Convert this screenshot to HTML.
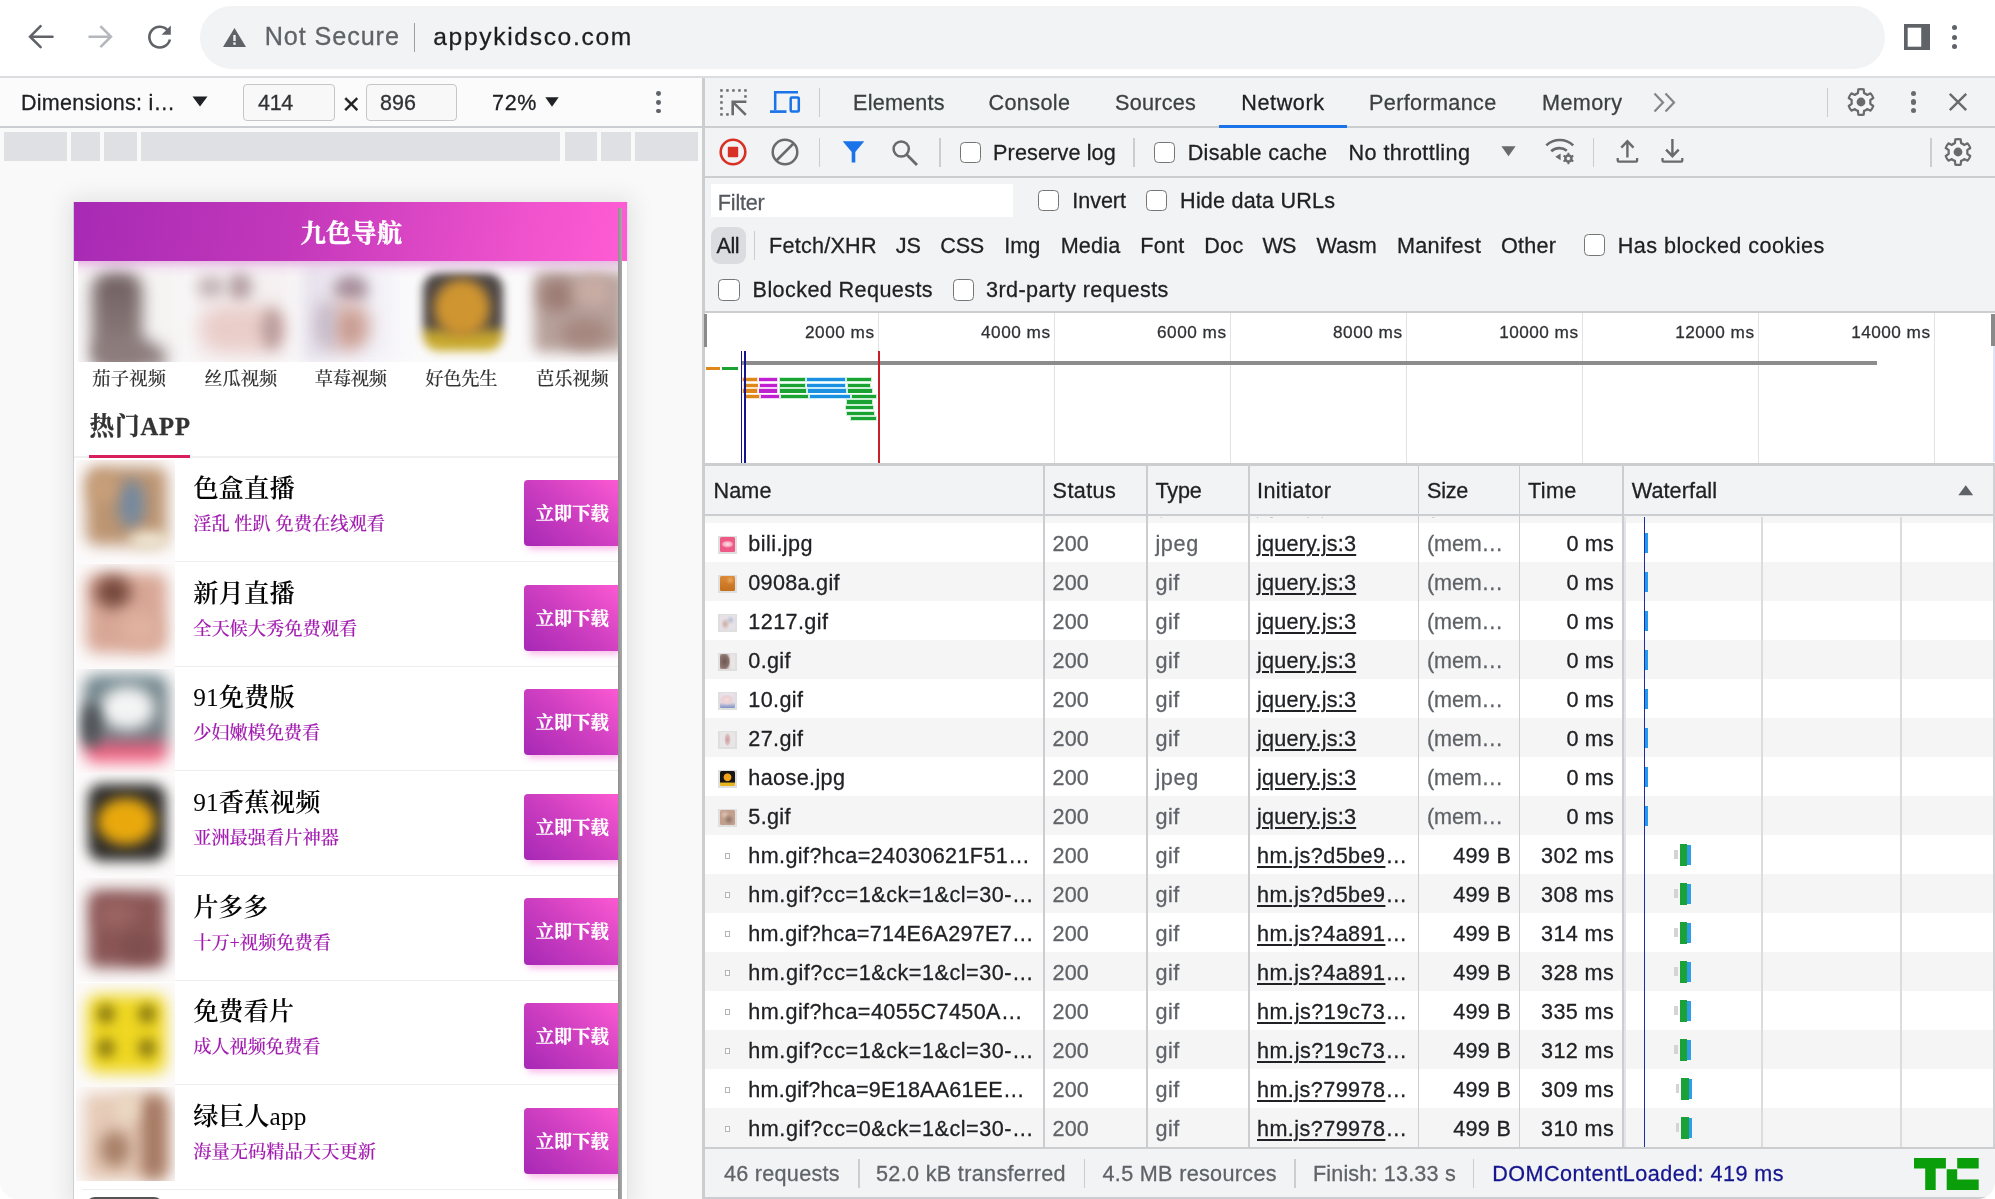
<!DOCTYPE html>
<html lang="zh-CN">
<head>
<meta charset="utf-8">
<title>appykidsco.com</title>
<style>
*{box-sizing:border-box;margin:0;padding:0}
html,body{width:1995px;height:1199px;overflow:hidden;background:#fff}
#root{opacity:.9999;position:absolute;left:0;top:0;width:1995px;height:1199px;overflow:hidden;background:#fff;font-family:"Liberation Sans","Noto Sans CJK SC",sans-serif}
.a{position:absolute}
.t{position:absolute;white-space:pre;display:block}
#phone{position:absolute;left:74.3px;top:202px;width:552.9px;height:997px;overflow:hidden;background:#fff}
.t{-webkit-text-stroke:.28px currentColor}
.f{-webkit-text-stroke:0}

</style>
</head>
<body>
<div id="root">
<div class="a" style="left:0px;top:0px;width:1995px;height:76px;background:#fff;"></div>
<div class="a" style="left:200px;top:6px;width:1685px;height:62.6px;background:#f1f3f4;border-radius:31.3px;"></div>
<div class="a" style="left:0px;top:75.8px;width:1995px;height:2px;background:#dcdde0;"></div>
<div class="a" style="left:0px;top:77.5px;width:702px;height:1122px;background:#f9f9f9;"></div>
<div class="a" style="left:0px;top:77.5px;width:702px;height:49.5px;background:#fbfbfb;"></div>
<div class="a" style="left:0px;top:126px;width:702px;height:1.9px;background:#cacdd1;"></div>
<div class="a" style="left:4px;top:132px;width:62.5px;height:28.5px;background:#dfe0e4;"></div>
<div class="a" style="left:71px;top:132px;width:29px;height:28.5px;background:#dfe0e4;"></div>
<div class="a" style="left:104px;top:132px;width:33px;height:28.5px;background:#dfe0e4;"></div>
<div class="a" style="left:141.3px;top:132px;width:418.7px;height:28.5px;background:#dfe0e4;"></div>
<div class="a" style="left:564.5px;top:132px;width:32.5px;height:28.5px;background:#dfe0e4;"></div>
<div class="a" style="left:601px;top:132px;width:30px;height:28.5px;background:#dfe0e4;"></div>
<div class="a" style="left:635px;top:132px;width:62.5px;height:28.5px;background:#dfe0e4;"></div>
<div class="a" style="left:702px;top:77.5px;width:1293px;height:1122px;background:#f1f3f4;"></div>
<div class="a" style="left:702px;top:77.5px;width:2.5px;height:1122px;background:#cbcdd1;"></div>
<div class="a" style="left:704px;top:126.3px;width:1291px;height:1.9px;background:#cbcdd1;"></div>
<div class="a" style="left:704px;top:176.3px;width:1291px;height:1.9px;background:#cbcdd1;"></div>
<div class="a" style="left:704px;top:311.2px;width:1291px;height:1.9px;background:#cbcdd1;"></div>
<svg class="a" style="left:26px;top:23px;" width="30" height="28" viewBox="0 0 30 28"><path d="M26.5 13.7H4.6M14.6 3.2L4.1 13.7l10.5 10.5" fill="none" stroke="#5f6368" stroke-width="2.6" stroke-linecap="round"/></svg>
<svg class="a" style="left:86px;top:23px;" width="30" height="28" viewBox="0 0 30 28"><path d="M2.5 13.7h21.9M14.4 3.2l10.5 10.5-10.5 10.5" fill="none" stroke="#b4b7bb" stroke-width="2.6"/></svg>
<svg class="a" style="left:145.3px;top:22px;" width="30" height="30" viewBox="0 0 30 30"><path d="M23.2 9.0A10.4 10.4 0 1 0 24.9 17.5" fill="none" stroke="#5f6368" stroke-width="2.6"/><path d="M25.8 3.6v9.2h-9.2z" fill="#5f6368"/></svg>
<svg class="a" style="left:222px;top:27px;" width="25" height="21" viewBox="0 0 25 21"><path d="M12.5 1L24 20H1z" fill="#5f6368"/><rect x="11.3" y="8" width="2.4" height="6" fill="#f1f3f4"/><rect x="11.3" y="15.4" width="2.4" height="2.4" fill="#f1f3f4"/></svg>
<div class="a" style="left:413.9px;top:22.6px;width:1.5px;height:29px;background:#9aa0a6;"></div>
<svg class="a" style="left:1904px;top:24px;" width="26" height="26" viewBox="0 0 26 26"><path d="M0 0h26v26H0z" fill="#5f6368"/><rect x="3.7" y="3.7" width="13.5" height="19" fill="#fff"/></svg>
<div class="a" style="left:1951.6px;top:25.099999999999998px;width:5.2px;height:5.2px;background:#5f6368;border-radius:50%;"></div>
<div class="a" style="left:1951.6px;top:34.5px;width:5.2px;height:5.2px;background:#5f6368;border-radius:50%;"></div>
<div class="a" style="left:1951.6px;top:43.8px;width:5.2px;height:5.2px;background:#5f6368;border-radius:50%;"></div>
<svg class="a" style="left:192px;top:96px;" width="16" height="11" viewBox="0 0 16 11"><path d="M0.5 0.5h15L8 10.5z" fill="#202124"/></svg>
<div class="a" style="left:243.2px;top:84.2px;width:92px;height:36.8px;background:#f8f8f8;border:1.3px solid #c6c6c6;border-radius:4px;"></div>
<div class="a" style="left:365.5px;top:84.2px;width:91.8px;height:36.8px;background:#f8f8f8;border:1.3px solid #c6c6c6;border-radius:4px;"></div>
<svg class="a" style="left:545px;top:96.5px;" width="14" height="10" viewBox="0 0 14 10"><path d="M0.3 0.3h13.4L7 9.7z" fill="#202124"/></svg>
<div class="a" style="left:656.2px;top:91.1px;width:4.8px;height:4.8px;background:#5f6368;border-radius:50%;"></div>
<div class="a" style="left:656.2px;top:99.89999999999999px;width:4.8px;height:4.8px;background:#5f6368;border-radius:50%;"></div>
<div class="a" style="left:656.2px;top:108.6px;width:4.8px;height:4.8px;background:#5f6368;border-radius:50%;"></div>
<svg class="a" style="left:719px;top:88px;" width="29" height="29" viewBox="0 0 29 29"><rect x="1.2" y="1.2" width="2.5" height="2.5" fill="#6a6a6a"/><rect x="7.2" y="1.2" width="2.5" height="2.5" fill="#6a6a6a"/><rect x="13.2" y="1.2" width="2.5" height="2.5" fill="#6a6a6a"/><rect x="19.2" y="1.2" width="2.5" height="2.5" fill="#6a6a6a"/><rect x="25.2" y="1.2" width="2.5" height="2.5" fill="#6a6a6a"/><rect x="25.2" y="7.2" width="2.5" height="2.5" fill="#6a6a6a"/><rect x="1.2" y="7.2" width="2.5" height="2.5" fill="#6a6a6a"/><rect x="1.2" y="13.2" width="2.5" height="2.5" fill="#6a6a6a"/><rect x="1.2" y="19.2" width="2.5" height="2.5" fill="#6a6a6a"/><rect x="1.2" y="25.2" width="2.5" height="2.5" fill="#6a6a6a"/><rect x="7.2" y="25.2" width="2.5" height="2.5" fill="#6a6a6a"/><path d="M12.4 13.800H27.400M13.700 12.500V27.200M14.200 14.300L26.800 26.900" fill="none" stroke="#6a6a6a" stroke-width="2.600"/></svg>
<svg class="a" style="left:769px;top:89px;" width="32" height="26" viewBox="0 0 32 26"><path d="M6.2 21.2V3.2H29" fill="none" stroke="#1a73e8" stroke-width="2.5"/><path d="M1 22.6H17.5" fill="none" stroke="#1a73e8" stroke-width="2.7"/><rect x="21.7" y="8.4" width="8.1" height="14.2" rx="1" fill="none" stroke="#1a73e8" stroke-width="2.5"/></svg>
<div class="a" style="left:818.7px;top:88px;width:1.5px;height:28.5px;background:#cbcdd1;"></div>
<div class="a" style="left:1219px;top:124.5px;width:128px;height:3.2px;background:#1a73e8;"></div>
<svg class="a" style="left:1653px;top:92px;" width="24" height="21" viewBox="0 0 24 21"><path d="M1.5 1.5l8.5 9-8.5 9M12.5 1.5l8.5 9-8.5 9" fill="none" stroke="#858585" stroke-width="2.2"/></svg>
<div class="a" style="left:1826.5px;top:88px;width:1.5px;height:28.5px;background:#cbcdd1;"></div>
<svg class="a" style="left:1845.4px;top:86px;" width="32" height="32" viewBox="-16 -16 32 32"><path d="M3.06 -8.89L2.68 -12.62A12.9 12.9 0 0 0 -2.68 -12.62L-3.06 -8.89A9.4 9.4 0 0 0 -6.17 -7.09L-9.59 -8.63A12.9 12.9 0 0 0 -12.27 -3.99L-9.23 -1.79A9.4 9.4 0 0 0 -9.23 1.79L-12.27 3.99A12.9 12.9 0 0 0 -9.59 8.63L-6.17 7.09A9.4 9.4 0 0 0 -3.06 8.89L-2.68 12.62A12.9 12.9 0 0 0 2.68 12.62L3.06 8.89A9.4 9.4 0 0 0 6.17 7.09L9.59 8.63A12.9 12.9 0 0 0 12.27 3.99L9.23 1.79A9.4 9.4 0 0 0 9.23 -1.79L12.27 -3.99A12.9 12.9 0 0 0 9.59 -8.63L6.17 -7.09A9.4 9.4 0 0 0 3.06 -8.89Z" fill="#f4f5f6" stroke="#6a6a6a" stroke-width="2.2" stroke-linejoin="round"/><circle cx="0" cy="0" r="4.4" fill="#6a6a6a"/></svg>
<div class="a" style="left:1910.8px;top:91.0px;width:5.2px;height:5.2px;background:#6a6a6a;border-radius:50%;"></div>
<div class="a" style="left:1910.8px;top:99.4px;width:5.2px;height:5.2px;background:#6a6a6a;border-radius:50%;"></div>
<div class="a" style="left:1910.8px;top:108.0px;width:5.2px;height:5.2px;background:#6a6a6a;border-radius:50%;"></div>
<svg class="a" style="left:1948px;top:92px;" width="20" height="20" viewBox="0 0 20 20"><path d="M1.8 1.8l16.4 16.4M18.200 1.8l-16.400 16.400" fill="none" stroke="#6a6a6a" stroke-width="2.4"/></svg>
<svg class="a" style="left:718px;top:137px;" width="30" height="30" viewBox="0 0 30 30"><circle cx="15" cy="15" r="12.3" fill="none" stroke="#d93025" stroke-width="2.6"/><rect x="9.8" y="9.8" width="10.4" height="10.4" rx="1" fill="#d93025"/></svg>
<svg class="a" style="left:770px;top:137px;" width="30" height="30" viewBox="0 0 30 30"><circle cx="15" cy="15" r="12.3" fill="none" stroke="#6a6a6a" stroke-width="2.5"/><path d="M6.5 23.500L23.500 6.5" stroke="#6a6a6a" stroke-width="2.5"/></svg>
<div class="a" style="left:818.7px;top:137.5px;width:1.5px;height:29px;background:#cbcdd1;"></div>
<svg class="a" style="left:842px;top:140px;" width="24" height="24" viewBox="0 0 24 24"><path d="M0.7 1.2H22.3L13.3 12.1V22.6H9.7V12.1z" fill="#1a73e8"/></svg>
<svg class="a" style="left:891px;top:138.5px;" width="28" height="27" viewBox="0 0 28 27"><circle cx="10.2" cy="10" r="7.6" fill="none" stroke="#6a6a6a" stroke-width="2.5"/><path d="M15.6 15.6L26 26" stroke="#6a6a6a" stroke-width="2.8"/></svg>
<div class="a" style="left:939.3px;top:137.5px;width:1.5px;height:29px;background:#cbcdd1;"></div>
<div class="a" style="left:960px;top:141.7px;width:21.3px;height:21.3px;background:#fff;border:1.5px solid #767676;border-radius:4.5px;"></div>
<div class="a" style="left:1133.3px;top:137.5px;width:1.5px;height:29px;background:#cbcdd1;"></div>
<div class="a" style="left:1153.8px;top:141.7px;width:21.3px;height:21.3px;background:#fff;border:1.5px solid #767676;border-radius:4.5px;"></div>
<svg class="a" style="left:1501.3px;top:146px;" width="15" height="10.5" viewBox="0 0 15 10.5"><path d="M0.4 0.2h14.2L7.5 10.3z" fill="#6a6a6a"/></svg>
<svg class="a" style="left:1544px;top:137px;" width="32" height="28" viewBox="0 0 32 28"><path d="M2.3 8.400C9.800 1.200 21.700 1.200 29.200 8.400" fill="none" stroke="#6a6a6a" stroke-width="2.6"/><path d="M7.2 14.300c4.300-4.100 11.400-4.100 15.600-0.600" fill="none" stroke="#6a6a6a" stroke-width="2.6"/><path d="M11.300 19.800l5.300-3.200v6.600z" fill="#6a6a6a"/><circle cx="24.400" cy="21.500" r="3.300" fill="none" stroke="#6a6a6a" stroke-width="2.100"/><path d="M24.400 15.800v11.400M19.500 18.650l9.800 5.700M19.500 24.350l9.800-5.700" stroke="#6a6a6a" stroke-width="1.900"/><circle cx="24.400" cy="21.500" r="1.700" fill="#f1f3f4"/></svg>
<div class="a" style="left:1592.7px;top:137.5px;width:1.5px;height:29px;background:#cbcdd1;"></div>
<svg class="a" style="left:1615px;top:138px;" width="25" height="26" viewBox="0 0 25 26"><path d="M12.4 19.500V2.800M6.300 9.600l6.100-6.400 6.100 6.400" fill="none" stroke="#6a6a6a" stroke-width="2.4"/><path d="M2.700 20v2.500q0 1.100 1.100 1.100h17.200q1.100 0 1.100-1.100V20" fill="none" stroke="#6a6a6a" stroke-width="2.300"/></svg>
<svg class="a" style="left:1659.7px;top:138px;" width="25" height="26" viewBox="0 0 25 26"><path d="M12.4 1V18M6.100 11.600l6.300 6.600 6.300-6.600" fill="none" stroke="#6a6a6a" stroke-width="2.4"/><path d="M2.500 20v2.500q0 1.100 1.100 1.100h17.600q1.100 0 1.100-1.100V20" fill="none" stroke="#6a6a6a" stroke-width="2.300"/></svg>
<div class="a" style="left:1930px;top:137.5px;width:1.5px;height:29px;background:#cbcdd1;"></div>
<svg class="a" style="left:1941.7px;top:136.2px;" width="32" height="32" viewBox="-16 -16 32 32"><path d="M3.06 -8.89L2.68 -12.62A12.9 12.9 0 0 0 -2.68 -12.62L-3.06 -8.89A9.4 9.4 0 0 0 -6.17 -7.09L-9.59 -8.63A12.9 12.9 0 0 0 -12.27 -3.99L-9.23 -1.79A9.4 9.4 0 0 0 -9.23 1.79L-12.27 3.99A12.9 12.9 0 0 0 -9.59 8.63L-6.17 7.09A9.4 9.4 0 0 0 -3.06 8.89L-2.68 12.62A12.9 12.9 0 0 0 2.68 12.62L3.06 8.89A9.4 9.4 0 0 0 6.17 7.09L9.59 8.63A12.9 12.9 0 0 0 12.27 3.99L9.23 1.79A9.4 9.4 0 0 0 9.23 -1.79L12.27 -3.99A12.9 12.9 0 0 0 9.59 -8.63L6.17 -7.09A9.4 9.4 0 0 0 3.06 -8.89Z" fill="#f4f5f6" stroke="#6a6a6a" stroke-width="2.2" stroke-linejoin="round"/><circle cx="0" cy="0" r="4.4" fill="#6a6a6a"/></svg>
<div class="a" style="left:711px;top:184px;width:302px;height:33px;background:#fff;"></div>
<div class="a" style="left:1037.7px;top:190px;width:21.3px;height:21.3px;background:#fff;border:1.5px solid #767676;border-radius:4.5px;"></div>
<div class="a" style="left:1145.6px;top:190px;width:21.3px;height:21.3px;background:#fff;border:1.5px solid #767676;border-radius:4.5px;"></div>
<div class="a" style="left:711px;top:226.8px;width:34.8px;height:37.4px;background:#dadce0;border-radius:9px;"></div>
<div class="a" style="left:753.8px;top:231px;width:1.5px;height:28.5px;background:#cbcdd1;"></div>
<div class="a" style="left:1584px;top:234.3px;width:21.3px;height:21.3px;background:#fff;border:1.5px solid #767676;border-radius:4.5px;"></div>
<div class="a" style="left:718.3px;top:279.4px;width:21.3px;height:21.3px;background:#fff;border:1.5px solid #767676;border-radius:4.5px;"></div>
<div class="a" style="left:952.6px;top:279.4px;width:21.3px;height:21.3px;background:#fff;border:1.5px solid #767676;border-radius:4.5px;"></div>
<div class="a" style="left:704.5px;top:313px;width:1290.5px;height:150px;background:#fff;"></div>
<div class="a" style="left:878.0px;top:313px;width:1.3px;height:150px;background:#e2e2e2;"></div>
<div class="a" style="left:1054.0px;top:313px;width:1.3px;height:150px;background:#e2e2e2;"></div>
<div class="a" style="left:1230.0px;top:313px;width:1.3px;height:150px;background:#e2e2e2;"></div>
<div class="a" style="left:1406.0px;top:313px;width:1.3px;height:150px;background:#e2e2e2;"></div>
<div class="a" style="left:1582.0px;top:313px;width:1.3px;height:150px;background:#e2e2e2;"></div>
<div class="a" style="left:1758.0px;top:313px;width:1.3px;height:150px;background:#e2e2e2;"></div>
<div class="a" style="left:1934.0px;top:313px;width:1.3px;height:150px;background:#e2e2e2;"></div>
<div class="a" style="left:703.5px;top:314px;width:3.3px;height:32.6px;background:#8a8a8a;"></div>
<div class="a" style="left:1991px;top:313.7px;width:4px;height:32.7px;background:#8a8a8a;"></div>
<div class="a" style="left:1993px;top:346.4px;width:2px;height:116px;background:#dce6f8;"></div>
<div class="a" style="left:742px;top:361px;width:1134.7px;height:3.7px;background:#8c8c8c;"></div>
<div class="a" style="left:706.2px;top:366.8px;width:13.6px;height:3.5px;background:#e0871c;"></div>
<div class="a" style="left:722px;top:366.8px;width:16.1px;height:3.5px;background:#1aa332;"></div>
<div class="a" style="left:741.8000000000001px;top:377.1px;width:16.299999999999933px;height:5.2px;background:#fbe3c4;"></div>
<div class="a" style="left:758.5px;top:377.1px;width:19.500000000000092px;height:5.2px;background:#f3d3f7;"></div>
<div class="a" style="left:778.9000000000001px;top:377.1px;width:26.899999999999956px;height:5.2px;background:#c9f0d2;"></div>
<div class="a" style="left:806.2px;top:377.1px;width:39.49999999999998px;height:5.2px;background:#c8ecfb;"></div>
<div class="a" style="left:846.4000000000001px;top:377.1px;width:25.399999999999956px;height:5.2px;background:#c9f0d2;"></div>
<div class="a" style="left:742.6px;top:378px;width:14.699999999999932px;height:3.4px;background:#e0871c;"></div>
<div class="a" style="left:759.3px;top:378px;width:17.90000000000009px;height:3.4px;background:#c020d0;"></div>
<div class="a" style="left:779.7px;top:378px;width:25.299999999999955px;height:3.4px;background:#1aa332;"></div>
<div class="a" style="left:807px;top:378px;width:37.89999999999998px;height:3.4px;background:#1c90e0;"></div>
<div class="a" style="left:847.2px;top:378px;width:23.799999999999955px;height:3.4px;background:#1aa332;"></div>
<div class="a" style="left:742.7px;top:382.70000000000005px;width:15.6px;height:5.2px;background:#fbe3c4;"></div>
<div class="a" style="left:759.0px;top:382.70000000000005px;width:19.000000000000092px;height:5.2px;background:#f3d3f7;"></div>
<div class="a" style="left:779.2px;top:382.70000000000005px;width:26.899999999999956px;height:5.2px;background:#c9f0d2;"></div>
<div class="a" style="left:806.5px;top:382.70000000000005px;width:39.50000000000009px;height:5.2px;background:#c8ecfb;"></div>
<div class="a" style="left:846.7px;top:382.70000000000005px;width:24.300000000000047px;height:5.2px;background:#c9f0d2;"></div>
<div class="a" style="left:743.5px;top:383.6px;width:14.0px;height:3.4px;background:#e0871c;"></div>
<div class="a" style="left:759.8px;top:383.6px;width:17.40000000000009px;height:3.4px;background:#c020d0;"></div>
<div class="a" style="left:780px;top:383.6px;width:25.299999999999955px;height:3.4px;background:#1aa332;"></div>
<div class="a" style="left:807.3px;top:383.6px;width:37.90000000000009px;height:3.4px;background:#1c90e0;"></div>
<div class="a" style="left:847.5px;top:383.6px;width:22.700000000000045px;height:3.4px;background:#1aa332;"></div>
<div class="a" style="left:741.8000000000001px;top:388.3px;width:16.299999999999933px;height:5.2px;background:#fbe3c4;"></div>
<div class="a" style="left:758.5px;top:388.3px;width:19.500000000000092px;height:5.2px;background:#f3d3f7;"></div>
<div class="a" style="left:778.9000000000001px;top:388.3px;width:27.69999999999991px;height:5.2px;background:#c9f0d2;"></div>
<div class="a" style="left:807.2px;top:388.3px;width:39.399999999999956px;height:5.2px;background:#c8ecfb;"></div>
<div class="a" style="left:847.2px;top:388.3px;width:25.6px;height:5.2px;background:#c9f0d2;"></div>
<div class="a" style="left:742.6px;top:389.2px;width:14.699999999999932px;height:3.4px;background:#e0871c;"></div>
<div class="a" style="left:759.3px;top:389.2px;width:17.90000000000009px;height:3.4px;background:#c020d0;"></div>
<div class="a" style="left:779.7px;top:389.2px;width:26.09999999999991px;height:3.4px;background:#1aa332;"></div>
<div class="a" style="left:808px;top:389.2px;width:37.799999999999955px;height:3.4px;background:#1c90e0;"></div>
<div class="a" style="left:848px;top:389.2px;width:24px;height:3.4px;background:#1aa332;"></div>
<div class="a" style="left:745.2px;top:393.90000000000003px;width:14.6px;height:5.2px;background:#fbe3c4;"></div>
<div class="a" style="left:760.4000000000001px;top:393.90000000000003px;width:19.399999999999956px;height:5.2px;background:#f3d3f7;"></div>
<div class="a" style="left:780.4000000000001px;top:393.90000000000003px;width:28.19999999999991px;height:5.2px;background:#c9f0d2;"></div>
<div class="a" style="left:808.8000000000001px;top:393.90000000000003px;width:41.99999999999998px;height:5.2px;background:#c8ecfb;"></div>
<div class="a" style="left:851.4000000000001px;top:393.90000000000003px;width:25.49999999999998px;height:5.2px;background:#c9f0d2;"></div>
<div class="a" style="left:746px;top:394.8px;width:13px;height:3.4px;background:#e0871c;"></div>
<div class="a" style="left:761.2px;top:394.8px;width:17.799999999999955px;height:3.4px;background:#c020d0;"></div>
<div class="a" style="left:781.2px;top:394.8px;width:26.59999999999991px;height:3.4px;background:#1aa332;"></div>
<div class="a" style="left:809.6px;top:394.8px;width:40.39999999999998px;height:3.4px;background:#1c90e0;"></div>
<div class="a" style="left:852.2px;top:394.8px;width:23.899999999999977px;height:3.4px;background:#1aa332;"></div>
<div class="a" style="left:846.1px;top:399.40000000000003px;width:26.90000000000007px;height:5.2px;background:#c9f0d2;"></div>
<div class="a" style="left:846.9px;top:400.3px;width:25.300000000000068px;height:3.4px;background:#1aa332;"></div>
<div class="a" style="left:845.4000000000001px;top:405.0px;width:28.49999999999998px;height:5.2px;background:#c9f0d2;"></div>
<div class="a" style="left:846.2px;top:405.9px;width:26.899999999999977px;height:3.4px;background:#1aa332;"></div>
<div class="a" style="left:845.8000000000001px;top:410.6px;width:29.399999999999956px;height:5.2px;background:#c9f0d2;"></div>
<div class="a" style="left:846.6px;top:411.5px;width:27.799999999999955px;height:3.4px;background:#1aa332;"></div>
<div class="a" style="left:850.1px;top:416.1px;width:26.800000000000047px;height:5.2px;background:#c9f0d2;"></div>
<div class="a" style="left:850.9px;top:417px;width:25.200000000000045px;height:3.4px;background:#1aa332;"></div>
<div class="a" style="left:740.6px;top:351px;width:1.6px;height:112px;background:#14148c;"></div>
<div class="a" style="left:744.1px;top:351px;width:1.8px;height:112px;background:#14148c;"></div>
<div class="a" style="left:878.1px;top:351px;width:1.7px;height:112px;background:#c8202a;"></div>
<div class="a" style="left:704.5px;top:462.5px;width:1290.5px;height:3px;background:#cbcdd1;"></div>
<div class="a" style="left:704.5px;top:465.5px;width:1290.5px;height:49px;background:#f1f3f4;"></div>
<div class="a" style="left:704.5px;top:514.2px;width:1290.5px;height:2.3px;background:#cbcdd1;"></div>
<svg class="a" style="left:1957.5px;top:485px;" width="15.5" height="10.5" viewBox="0 0 15.5 10.5"><path d="M0.3 10.2h14.9L7.75 0.3z" fill="#5f6368"/></svg>
<div class="a" style="left:704.5px;top:516.5px;width:1290.5px;height:6.600000000000023px;background:#f5f5f5;"></div>
<div class="a" style="left:704.5px;top:516.5px;width:1290px;height:6.600000000000023px;overflow:hidden" id="prow"><span class="t" id="t48" style='left:450.90px;top:-25.10px;font:400 21.6px/28px "Liberation Sans","Noto Sans CJK SC",sans-serif;color:#5f6368;letter-spacing:0.544px;'>gif</span>
<span class="t" id="t49" style='left:552.50px;top:-25.10px;font:400 21.6px/28px "Liberation Sans","Noto Sans CJK SC",sans-serif;color:#202124;letter-spacing:0.217px;text-decoration:underline;text-decoration-thickness:1.6px;text-underline-offset:2.5px;'>jquery.js:3</span>
<span class="t" id="t50" style='left:722.50px;top:-25.10px;font:400 21.6px/28px "Liberation Sans","Noto Sans CJK SC",sans-serif;color:#5f6368;letter-spacing:-0.145px;'>(mem…</span></div>
<div class="a" style="left:704.5px;top:523.1px;width:1290.5px;height:39.0px;background:#fff;"></div>
<div class="a" style="left:718.2px;top:535.5px;width:18.6px;height:18.2px;background:#dfdfdf;"><div class="a" style="left:1.6px;top:1.6px;width:15.4px;height:15px;border-radius:1.5px;background:radial-gradient(ellipse 42% 24% at 50% 48%,#fde3ea 0,#f7a6bc 70%,transparent 100%),#ee5a85"></div></div>
<div class="a" style="left:704.5px;top:562.1px;width:1290.5px;height:39.0px;background:#f5f5f5;"></div>
<div class="a" style="left:718.2px;top:574.5px;width:18.6px;height:18.2px;background:#dfdfdf;"><div class="a" style="left:1.6px;top:1.6px;width:15.4px;height:15px;border-radius:1.5px;background:radial-gradient(ellipse 30% 30% at 68% 28%,#eaa45a 0,transparent 100%),linear-gradient(#db8a36,#c4701f)"></div></div>
<div class="a" style="left:704.5px;top:601.1px;width:1290.5px;height:39.0px;background:#fff;"></div>
<div class="a" style="left:718.2px;top:613.5px;width:18.6px;height:18.2px;background:#dfdfdf;"><div class="a" style="left:1.6px;top:1.6px;width:15.4px;height:15px;border-radius:1.5px;background:radial-gradient(ellipse 30% 40% at 35% 60%,#c9ad9f 0,transparent 100%),radial-gradient(ellipse 30% 30% at 70% 35%,#b9bfd6 0,transparent 100%),#e6e1e7"></div></div>
<div class="a" style="left:704.5px;top:640.1px;width:1290.5px;height:39.0px;background:#f5f5f5;"></div>
<div class="a" style="left:718.2px;top:652.5px;width:18.6px;height:18.2px;background:#dfdfdf;"><div class="a" style="left:1.6px;top:1.6px;width:15.4px;height:15px;border-radius:1.5px;background:radial-gradient(ellipse 40% 60% at 30% 50%,#6f5853 0,#8a736d 70%,transparent 100%),linear-gradient(90deg,#9a8580,#e9e5e5 75%)"></div></div>
<div class="a" style="left:704.5px;top:679.1px;width:1290.5px;height:39.0px;background:#fff;"></div>
<div class="a" style="left:718.2px;top:691.5px;width:18.6px;height:18.2px;background:#dfdfdf;"><div class="a" style="left:1.6px;top:1.6px;width:15.4px;height:15px;border-radius:1.5px;background:radial-gradient(ellipse 45% 35% at 45% 45%,#f3dcdc 0,#ecd0d2 70%,transparent 100%),linear-gradient(#e9e3ea 0,#e4dbe4 62%,#7f8fc4 100%)"></div></div>
<div class="a" style="left:704.5px;top:718.1px;width:1290.5px;height:39.0px;background:#f5f5f5;"></div>
<div class="a" style="left:718.2px;top:730.5px;width:18.6px;height:18.2px;background:#dfdfdf;"><div class="a" style="left:1.6px;top:1.6px;width:15.4px;height:15px;border-radius:1.5px;background:radial-gradient(ellipse 22% 45% at 50% 50%,#cf9d9d 0,#ddbcbc 70%,transparent 100%),#e8e5e7"></div></div>
<div class="a" style="left:704.5px;top:757.1px;width:1290.5px;height:39.0px;background:#fff;"></div>
<div class="a" style="left:718.2px;top:769.5px;width:18.6px;height:18.2px;background:#dfdfdf;"><div class="a" style="left:1.6px;top:1.6px;width:15.4px;height:15px;border-radius:1.5px;background:radial-gradient(circle 4.3px at 50% 42%,#f0a51c 0,#eea21a 80%,transparent 100%),linear-gradient(#181614 0,#181614 74%,#e8b51e 80%,#e8b51e 100%)"></div></div>
<div class="a" style="left:704.5px;top:796.1px;width:1290.5px;height:39.0px;background:#f5f5f5;"></div>
<div class="a" style="left:718.2px;top:808.5px;width:18.6px;height:18.2px;background:#dfdfdf;"><div class="a" style="left:1.6px;top:1.6px;width:15.4px;height:15px;border-radius:1.5px;background:radial-gradient(ellipse 35% 35% at 60% 65%,#8d7468 0,transparent 100%),radial-gradient(ellipse 30% 30% at 30% 30%,#dcc0b0 0,transparent 100%),#c3a08e"></div></div>
<div class="a" style="left:704.5px;top:835.1px;width:1290.5px;height:39.0px;background:#fff;"></div>
<div class="a" style="left:724.8px;top:853.4px;width:5.4px;height:5.4px;background:#fff;border:1.2px solid #b4b4b4;"></div>
<div class="a" style="left:704.5px;top:874.1px;width:1290.5px;height:39.0px;background:#f5f5f5;"></div>
<div class="a" style="left:724.8px;top:892.4px;width:5.4px;height:5.4px;background:#fff;border:1.2px solid #b4b4b4;"></div>
<div class="a" style="left:704.5px;top:913.1px;width:1290.5px;height:39.0px;background:#fff;"></div>
<div class="a" style="left:724.8px;top:931.4px;width:5.4px;height:5.4px;background:#fff;border:1.2px solid #b4b4b4;"></div>
<div class="a" style="left:704.5px;top:952.1px;width:1290.5px;height:39.0px;background:#f5f5f5;"></div>
<div class="a" style="left:724.8px;top:970.4px;width:5.4px;height:5.4px;background:#fff;border:1.2px solid #b4b4b4;"></div>
<div class="a" style="left:704.5px;top:991.1px;width:1290.5px;height:39.0px;background:#fff;"></div>
<div class="a" style="left:724.8px;top:1009.4px;width:5.4px;height:5.4px;background:#fff;border:1.2px solid #b4b4b4;"></div>
<div class="a" style="left:704.5px;top:1030.1px;width:1290.5px;height:39.0px;background:#f5f5f5;"></div>
<div class="a" style="left:724.8px;top:1048.3999999999999px;width:5.4px;height:5.4px;background:#fff;border:1.2px solid #b4b4b4;"></div>
<div class="a" style="left:704.5px;top:1069.1px;width:1290.5px;height:39.0px;background:#fff;"></div>
<div class="a" style="left:724.8px;top:1087.3999999999999px;width:5.4px;height:5.4px;background:#fff;border:1.2px solid #b4b4b4;"></div>
<div class="a" style="left:704.5px;top:1108.1px;width:1290.5px;height:39.200000000000045px;background:#f5f5f5;"></div>
<div class="a" style="left:724.8px;top:1126.3999999999999px;width:5.4px;height:5.4px;background:#fff;border:1.2px solid #b4b4b4;"></div>
<div class="a" style="left:1043.2px;top:465.5px;width:1.6px;height:682px;background:#cbcdd1;"></div>
<div class="a" style="left:1146px;top:465.5px;width:1.6px;height:682px;background:#cbcdd1;"></div>
<div class="a" style="left:1248.3px;top:465.5px;width:1.6px;height:682px;background:#cbcdd1;"></div>
<div class="a" style="left:1417.8px;top:465.5px;width:1.6px;height:682px;background:#cbcdd1;"></div>
<div class="a" style="left:1518.8px;top:465.5px;width:1.6px;height:682px;background:#cbcdd1;"></div>
<div class="a" style="left:1622.2px;top:465.5px;width:1.6px;height:682px;background:#cbcdd1;"></div>
<div class="a" style="left:1623.8px;top:516.5px;width:2.2px;height:631px;background:#e4e5e8;"></div>
<div class="a" style="left:1761.4px;top:516.5px;width:1.3px;height:631px;background:#dcdcdc;"></div>
<div class="a" style="left:1900.4px;top:516.5px;width:1.3px;height:631px;background:#dcdcdc;"></div>
<div class="a" style="left:1644.3px;top:533.1px;width:3.5px;height:19.5px;background:#1f9bf0;"></div>
<div class="a" style="left:1644.3px;top:572.1px;width:3.5px;height:19.5px;background:#1f9bf0;"></div>
<div class="a" style="left:1644.3px;top:611.1px;width:3.5px;height:19.5px;background:#1f9bf0;"></div>
<div class="a" style="left:1644.3px;top:650.1px;width:3.5px;height:19.5px;background:#1f9bf0;"></div>
<div class="a" style="left:1644.3px;top:689.1px;width:3.5px;height:19.5px;background:#1f9bf0;"></div>
<div class="a" style="left:1644.3px;top:728.1px;width:3.5px;height:19.5px;background:#1f9bf0;"></div>
<div class="a" style="left:1644.3px;top:767.1px;width:3.5px;height:19.5px;background:#1f9bf0;"></div>
<div class="a" style="left:1644.3px;top:806.1px;width:3.5px;height:19.5px;background:#1f9bf0;"></div>
<div class="a" style="left:1674.4px;top:850.3000000000001px;width:3.6px;height:9px;background:#d4d4d4;"></div>
<div class="a" style="left:1679.6px;top:843.8000000000001px;width:7.9px;height:22.6px;background:#1aa238;"></div>
<div class="a" style="left:1687.4px;top:845.3000000000001px;width:3.5px;height:19.7px;background:#2f9ee8;"></div>
<div class="a" style="left:1674.4px;top:889.3000000000001px;width:3.6px;height:9px;background:#d4d4d4;"></div>
<div class="a" style="left:1679.6px;top:882.8000000000001px;width:7.9px;height:22.6px;background:#1aa238;"></div>
<div class="a" style="left:1687.4px;top:884.3000000000001px;width:3.5px;height:19.7px;background:#2f9ee8;"></div>
<div class="a" style="left:1674.4px;top:928.3000000000001px;width:3.6px;height:9px;background:#d4d4d4;"></div>
<div class="a" style="left:1679.6px;top:921.8000000000001px;width:7.9px;height:22.6px;background:#1aa238;"></div>
<div class="a" style="left:1687.4px;top:923.3000000000001px;width:3.5px;height:19.7px;background:#2f9ee8;"></div>
<div class="a" style="left:1674.4px;top:967.3000000000001px;width:3.6px;height:9px;background:#d4d4d4;"></div>
<div class="a" style="left:1679.6px;top:960.8000000000001px;width:7.9px;height:22.6px;background:#1aa238;"></div>
<div class="a" style="left:1687.4px;top:962.3000000000001px;width:3.5px;height:19.7px;background:#2f9ee8;"></div>
<div class="a" style="left:1674.4px;top:1006.3000000000001px;width:3.6px;height:9px;background:#d4d4d4;"></div>
<div class="a" style="left:1679.6px;top:999.8000000000001px;width:7.9px;height:22.6px;background:#1aa238;"></div>
<div class="a" style="left:1687.4px;top:1001.3000000000001px;width:3.5px;height:19.7px;background:#2f9ee8;"></div>
<div class="a" style="left:1674.4px;top:1045.3px;width:3.6px;height:9px;background:#d4d4d4;"></div>
<div class="a" style="left:1679.6px;top:1038.8px;width:7.9px;height:22.6px;background:#1aa238;"></div>
<div class="a" style="left:1687.4px;top:1040.3px;width:3.5px;height:19.7px;background:#2f9ee8;"></div>
<div class="a" style="left:1675.9px;top:1084.3px;width:3.6px;height:9px;background:#d4d4d4;"></div>
<div class="a" style="left:1681.1px;top:1077.8px;width:7.45px;height:22.6px;background:#1aa238;"></div>
<div class="a" style="left:1688.9px;top:1079.3px;width:3.5px;height:19.7px;background:#2f9ee8;"></div>
<div class="a" style="left:1675.9px;top:1123.3px;width:3.6px;height:9px;background:#d4d4d4;"></div>
<div class="a" style="left:1681.1px;top:1116.8px;width:7.45px;height:22.6px;background:#1aa238;"></div>
<div class="a" style="left:1688.9px;top:1118.3px;width:3.5px;height:19.7px;background:#2f9ee8;"></div>
<div class="a" style="left:1643.6px;top:516.5px;width:1.6px;height:631px;background:#1f2ca6;"></div>
<div class="a" style="left:1992.6px;top:465.5px;width:2.4px;height:734px;background:#cfd1d5;"></div>
<div class="a" style="left:704.5px;top:1147.3px;width:1290.5px;height:52px;background:#f1f3f4;"></div>
<div class="a" style="left:704.5px;top:1147.1px;width:1290.5px;height:2px;background:#cbcdd1;"></div>
<div class="a" style="left:704.5px;top:1197.2px;width:1290.5px;height:2px;background:#cbcdd1;"></div>
<div class="a" style="left:858px;top:1159px;width:1.5px;height:29px;background:#cbcdd1;"></div>
<div class="a" style="left:1083.6px;top:1159px;width:1.5px;height:29px;background:#cbcdd1;"></div>
<div class="a" style="left:1294.2px;top:1159px;width:1.5px;height:29px;background:#cbcdd1;"></div>
<div class="a" style="left:1472.5px;top:1159px;width:1.5px;height:29px;background:#cbcdd1;"></div>
<svg class="a" style="left:1914.3px;top:1157.5px;" width="65" height="32" viewBox="0 0 65 32"><path d="M0 0H31.900V10.500H21.700V32H11.200V10.500H0z" fill="#0a9f0a"/><path d="M43.200 0H64.700V10.500H43.200zM32.700 11.300H43.200V21.500H64.700V32H32.700z" fill="#0a9f0a"/></svg>
<svg class="a" style="left:1978px;top:1182px;" width="17" height="17" viewBox="0 0 17 17"><path d="M17 0V17H0A17 17 0 0 0 17 0z" fill="#fff"/></svg>
<svg class="a" style="left:0px;top:1182px;" width="17" height="17" viewBox="0 0 17 17"><path d="M0 0V17H17A17 17 0 0 1 0 0z" fill="#fff"/></svg>
<div class="a" style="left:74.3px;top:202px;width:552.9px;height:1000px;background:#fff;box-shadow:0 2px 22px 6px rgba(0,0,0,.09);"></div>
<div class="a" style="left:73.3px;top:202px;width:1px;height:1000px;background:#cdcdd4;"></div>
<div class="a" style="left:627.3px;top:202px;width:1px;height:1000px;background:#e0e0e4;"></div>
<span class="t" id="t0" style='left:264.70px;top:20.20px;font:400 25.2px/33px "Liberation Sans","Noto Sans CJK SC",sans-serif;color:#5f6368;letter-spacing:0.911px;'>Not Secure</span>
<span class="t" id="t1" style='left:433.20px;top:21.10px;font:400 24.6px/32px "Liberation Sans","Noto Sans CJK SC",sans-serif;color:#1d1e20;letter-spacing:1.674px;'>appykidsco.com</span>
<span class="t" id="t2" style='left:21.00px;top:89.00px;font:400 21.5px/28px "Liberation Sans","Noto Sans CJK SC",sans-serif;color:#202124;letter-spacing:0.266px;'>Dimensions: i…</span>
<span class="t" id="t3" style='left:258.00px;top:89.00px;font:400 21.5px/28px "Liberation Sans","Noto Sans CJK SC",sans-serif;color:#303134;letter-spacing:-0.287px;'>414</span>
<span class="t" id="t4" style='left:342.50px;top:84.00px;font:400 30px/39px "Liberation Sans","Noto Sans CJK SC",sans-serif;color:#202124;'>×</span>
<span class="t" id="t5" style='left:380.00px;top:89.00px;font:400 21.5px/28px "Liberation Sans","Noto Sans CJK SC",sans-serif;color:#303134;letter-spacing:0.062px;'>896</span>
<span class="t" id="t6" style='left:492.00px;top:89.00px;font:400 21.5px/28px "Liberation Sans","Noto Sans CJK SC",sans-serif;color:#202124;letter-spacing:0.727px;'>72%</span>
<span class="t" id="t7" style='left:853.00px;top:89.00px;font:400 21.6px/28px "Liberation Sans","Noto Sans CJK SC",sans-serif;color:#3c4043;letter-spacing:0.226px;'>Elements</span>
<span class="t" id="t8" style='left:988.50px;top:89.00px;font:400 21.6px/28px "Liberation Sans","Noto Sans CJK SC",sans-serif;color:#3c4043;letter-spacing:0.378px;'>Console</span>
<span class="t" id="t9" style='left:1115.00px;top:89.00px;font:400 21.6px/28px "Liberation Sans","Noto Sans CJK SC",sans-serif;color:#3c4043;letter-spacing:0.264px;'>Sources</span>
<span class="t" id="t10" style='left:1241.30px;top:89.00px;font:400 21.6px/28px "Liberation Sans","Noto Sans CJK SC",sans-serif;color:#202124;letter-spacing:0.583px;'>Network</span>
<span class="t" id="t11" style='left:1369.00px;top:89.00px;font:400 21.6px/28px "Liberation Sans","Noto Sans CJK SC",sans-serif;color:#3c4043;letter-spacing:0.367px;'>Performance</span>
<span class="t" id="t12" style='left:1542.00px;top:89.00px;font:400 21.6px/28px "Liberation Sans","Noto Sans CJK SC",sans-serif;color:#3c4043;letter-spacing:0.403px;'>Memory</span>
<span class="t" id="t13" style='left:993.00px;top:139.00px;font:400 21.6px/28px "Liberation Sans","Noto Sans CJK SC",sans-serif;color:#202124;letter-spacing:0.142px;'>Preserve log</span>
<span class="t" id="t14" style='left:1187.70px;top:139.00px;font:400 21.6px/28px "Liberation Sans","Noto Sans CJK SC",sans-serif;color:#202124;letter-spacing:0.305px;'>Disable cache</span>
<span class="t" id="t15" style='left:1348.60px;top:139.00px;font:400 21.6px/28px "Liberation Sans","Noto Sans CJK SC",sans-serif;color:#202124;letter-spacing:0.414px;'>No throttling</span>
<span class="t" id="t16" style='left:717.80px;top:189.20px;font:400 21.6px/28px "Liberation Sans","Noto Sans CJK SC",sans-serif;color:#55595e;letter-spacing:-0.200px;'>Filter</span>
<span class="t" id="t17" style='left:1072.30px;top:187.40px;font:400 21.6px/28px "Liberation Sans","Noto Sans CJK SC",sans-serif;color:#202124;letter-spacing:-0.063px;'>Invert</span>
<span class="t" id="t18" style='left:1180.10px;top:187.40px;font:400 21.6px/28px "Liberation Sans","Noto Sans CJK SC",sans-serif;color:#202124;letter-spacing:0.189px;'>Hide data URLs</span>
<span class="t" id="t19" style='left:716.50px;top:232.00px;font:400 21.6px/28px "Liberation Sans","Noto Sans CJK SC",sans-serif;color:#202124;letter-spacing:-0.450px;'>All</span>
<span class="t" id="t20" style='left:769.00px;top:232.00px;font:400 21.6px/28px "Liberation Sans","Noto Sans CJK SC",sans-serif;color:#202124;letter-spacing:0.236px;'>Fetch/XHR</span>
<span class="t" id="t21" style='left:895.80px;top:232.00px;font:400 21.6px/28px "Liberation Sans","Noto Sans CJK SC",sans-serif;color:#202124;'>JS</span>
<span class="t" id="t22" style='left:940.30px;top:232.00px;font:400 21.6px/28px "Liberation Sans","Noto Sans CJK SC",sans-serif;color:#202124;letter-spacing:-0.253px;'>CSS</span>
<span class="t" id="t23" style='left:1004.20px;top:232.00px;font:400 21.6px/28px "Liberation Sans","Noto Sans CJK SC",sans-serif;color:#202124;letter-spacing:0.050px;'>Img</span>
<span class="t" id="t24" style='left:1060.70px;top:232.00px;font:400 21.6px/28px "Liberation Sans","Noto Sans CJK SC",sans-serif;color:#202124;letter-spacing:0.193px;'>Media</span>
<span class="t" id="t25" style='left:1140.30px;top:232.00px;font:400 21.6px/28px "Liberation Sans","Noto Sans CJK SC",sans-serif;color:#202124;letter-spacing:0.227px;'>Font</span>
<span class="t" id="t26" style='left:1204.20px;top:232.00px;font:400 21.6px/28px "Liberation Sans","Noto Sans CJK SC",sans-serif;color:#202124;letter-spacing:0.297px;'>Doc</span>
<span class="t" id="t27" style='left:1262.50px;top:232.00px;font:400 21.6px/28px "Liberation Sans","Noto Sans CJK SC",sans-serif;color:#202124;letter-spacing:-0.797px;'>WS</span>
<span class="t" id="t28" style='left:1316.50px;top:232.00px;font:400 21.6px/28px "Liberation Sans","Noto Sans CJK SC",sans-serif;color:#202124;letter-spacing:-0.025px;'>Wasm</span>
<span class="t" id="t29" style='left:1396.90px;top:232.00px;font:400 21.6px/28px "Liberation Sans","Noto Sans CJK SC",sans-serif;color:#202124;letter-spacing:0.356px;'>Manifest</span>
<span class="t" id="t30" style='left:1501.00px;top:232.00px;font:400 21.6px/28px "Liberation Sans","Noto Sans CJK SC",sans-serif;color:#202124;letter-spacing:0.246px;'>Other</span>
<span class="t" id="t31" style='left:1617.80px;top:232.00px;font:400 21.6px/28px "Liberation Sans","Noto Sans CJK SC",sans-serif;color:#202124;letter-spacing:0.475px;'>Has blocked cookies</span>
<span class="t" id="t32" style='left:752.60px;top:276.00px;font:400 21.6px/28px "Liberation Sans","Noto Sans CJK SC",sans-serif;color:#202124;letter-spacing:0.396px;'>Blocked Requests</span>
<span class="t" id="t33" style='left:986.00px;top:276.00px;font:400 21.6px/28px "Liberation Sans","Noto Sans CJK SC",sans-serif;color:#202124;letter-spacing:0.422px;'>3rd-party requests</span>
<span class="t" id="t34" style='left:805.00px;top:321.20px;font:400 17.2px/22px "Liberation Sans","Noto Sans CJK SC",sans-serif;color:#303134;letter-spacing:0.513px;'>2000 ms</span>
<span class="t" id="t35" style='left:981.00px;top:321.20px;font:400 17.2px/22px "Liberation Sans","Noto Sans CJK SC",sans-serif;color:#303134;letter-spacing:0.513px;'>4000 ms</span>
<span class="t" id="t36" style='left:1157.00px;top:321.20px;font:400 17.2px/22px "Liberation Sans","Noto Sans CJK SC",sans-serif;color:#303134;letter-spacing:0.513px;'>6000 ms</span>
<span class="t" id="t37" style='left:1333.00px;top:321.20px;font:400 17.2px/22px "Liberation Sans","Noto Sans CJK SC",sans-serif;color:#303134;letter-spacing:0.513px;'>8000 ms</span>
<span class="t" id="t38" style='left:1499.30px;top:321.20px;font:400 17.2px/22px "Liberation Sans","Noto Sans CJK SC",sans-serif;color:#303134;letter-spacing:0.459px;'>10000 ms</span>
<span class="t" id="t39" style='left:1675.30px;top:321.20px;font:400 17.2px/22px "Liberation Sans","Noto Sans CJK SC",sans-serif;color:#303134;letter-spacing:0.459px;'>12000 ms</span>
<span class="t" id="t40" style='left:1851.30px;top:321.20px;font:400 17.2px/22px "Liberation Sans","Noto Sans CJK SC",sans-serif;color:#303134;letter-spacing:0.459px;'>14000 ms</span>
<span class="t" id="t41" style='left:713.50px;top:477.00px;font:400 21.6px/28px "Liberation Sans","Noto Sans CJK SC",sans-serif;color:#202124;letter-spacing:0.097px;'>Name</span>
<span class="t" id="t42" style='left:1052.60px;top:477.00px;font:400 21.6px/28px "Liberation Sans","Noto Sans CJK SC",sans-serif;color:#202124;letter-spacing:0.396px;'>Status</span>
<span class="t" id="t43" style='left:1155.40px;top:477.00px;font:400 21.6px/28px "Liberation Sans","Noto Sans CJK SC",sans-serif;color:#202124;letter-spacing:-0.143px;'>Type</span>
<span class="t" id="t44" style='left:1257.00px;top:477.00px;font:400 21.6px/28px "Liberation Sans","Noto Sans CJK SC",sans-serif;color:#202124;letter-spacing:0.398px;'>Initiator</span>
<span class="t" id="t45" style='left:1427.00px;top:477.00px;font:400 21.6px/28px "Liberation Sans","Noto Sans CJK SC",sans-serif;color:#202124;letter-spacing:-0.239px;'>Size</span>
<span class="t" id="t46" style='left:1528.00px;top:477.00px;font:400 21.6px/28px "Liberation Sans","Noto Sans CJK SC",sans-serif;color:#202124;letter-spacing:0.371px;'>Time</span>
<span class="t" id="t47" style='left:1631.70px;top:477.00px;font:400 21.6px/28px "Liberation Sans","Noto Sans CJK SC",sans-serif;color:#202124;letter-spacing:0.112px;'>Waterfall</span>
<span class="t" id="t51" style='left:748.30px;top:530.40px;font:400 21.6px/28px "Liberation Sans","Noto Sans CJK SC",sans-serif;color:#202124;letter-spacing:0.426px;'>bili.jpg</span>
<span class="t" id="t52" style='left:1052.60px;top:530.40px;font:400 21.6px/28px "Liberation Sans","Noto Sans CJK SC",sans-serif;color:#5f6368;letter-spacing:0.084px;'>200</span>
<span class="t" id="t53" style='left:1155.40px;top:530.40px;font:400 21.6px/28px "Liberation Sans","Noto Sans CJK SC",sans-serif;color:#5f6368;letter-spacing:0.657px;'>jpeg</span>
<span class="t" id="t54" style='left:1257.00px;top:530.40px;font:400 21.6px/28px "Liberation Sans","Noto Sans CJK SC",sans-serif;color:#202124;letter-spacing:0.217px;text-decoration:underline;text-decoration-thickness:1.6px;text-underline-offset:2.5px;'>jquery.js:3</span>
<span class="t" id="t55" style='left:1427.00px;top:530.40px;font:400 21.6px/28px "Liberation Sans","Noto Sans CJK SC",sans-serif;color:#5f6368;letter-spacing:-0.145px;'>(mem…</span>
<span class="t" id="t56" style='left:1566.50px;top:530.40px;font:400 21.6px/28px "Liberation Sans","Noto Sans CJK SC",sans-serif;color:#202124;letter-spacing:0.168px;'>0 ms</span>
<span class="t" id="t57" style='left:748.30px;top:569.40px;font:400 21.6px/28px "Liberation Sans","Noto Sans CJK SC",sans-serif;color:#202124;letter-spacing:0.293px;'>0908a.gif</span>
<span class="t" id="t58" style='left:1052.60px;top:569.40px;font:400 21.6px/28px "Liberation Sans","Noto Sans CJK SC",sans-serif;color:#5f6368;letter-spacing:0.084px;'>200</span>
<span class="t" id="t59" style='left:1155.40px;top:569.40px;font:400 21.6px/28px "Liberation Sans","Noto Sans CJK SC",sans-serif;color:#5f6368;letter-spacing:0.544px;'>gif</span>
<span class="t" id="t60" style='left:1257.00px;top:569.40px;font:400 21.6px/28px "Liberation Sans","Noto Sans CJK SC",sans-serif;color:#202124;letter-spacing:0.217px;text-decoration:underline;text-decoration-thickness:1.6px;text-underline-offset:2.5px;'>jquery.js:3</span>
<span class="t" id="t61" style='left:1427.00px;top:569.40px;font:400 21.6px/28px "Liberation Sans","Noto Sans CJK SC",sans-serif;color:#5f6368;letter-spacing:-0.145px;'>(mem…</span>
<span class="t" id="t62" style='left:1566.50px;top:569.40px;font:400 21.6px/28px "Liberation Sans","Noto Sans CJK SC",sans-serif;color:#202124;letter-spacing:0.168px;'>0 ms</span>
<span class="t" id="t63" style='left:748.30px;top:608.40px;font:400 21.6px/28px "Liberation Sans","Noto Sans CJK SC",sans-serif;color:#202124;letter-spacing:0.408px;'>1217.gif</span>
<span class="t" id="t64" style='left:1052.60px;top:608.40px;font:400 21.6px/28px "Liberation Sans","Noto Sans CJK SC",sans-serif;color:#5f6368;letter-spacing:0.084px;'>200</span>
<span class="t" id="t65" style='left:1155.40px;top:608.40px;font:400 21.6px/28px "Liberation Sans","Noto Sans CJK SC",sans-serif;color:#5f6368;letter-spacing:0.544px;'>gif</span>
<span class="t" id="t66" style='left:1257.00px;top:608.40px;font:400 21.6px/28px "Liberation Sans","Noto Sans CJK SC",sans-serif;color:#202124;letter-spacing:0.217px;text-decoration:underline;text-decoration-thickness:1.6px;text-underline-offset:2.5px;'>jquery.js:3</span>
<span class="t" id="t67" style='left:1427.00px;top:608.40px;font:400 21.6px/28px "Liberation Sans","Noto Sans CJK SC",sans-serif;color:#5f6368;letter-spacing:-0.145px;'>(mem…</span>
<span class="t" id="t68" style='left:1566.50px;top:608.40px;font:400 21.6px/28px "Liberation Sans","Noto Sans CJK SC",sans-serif;color:#202124;letter-spacing:0.168px;'>0 ms</span>
<span class="t" id="t69" style='left:748.30px;top:647.40px;font:400 21.6px/28px "Liberation Sans","Noto Sans CJK SC",sans-serif;color:#202124;letter-spacing:0.343px;'>0.gif</span>
<span class="t" id="t70" style='left:1052.60px;top:647.40px;font:400 21.6px/28px "Liberation Sans","Noto Sans CJK SC",sans-serif;color:#5f6368;letter-spacing:0.084px;'>200</span>
<span class="t" id="t71" style='left:1155.40px;top:647.40px;font:400 21.6px/28px "Liberation Sans","Noto Sans CJK SC",sans-serif;color:#5f6368;letter-spacing:0.544px;'>gif</span>
<span class="t" id="t72" style='left:1257.00px;top:647.40px;font:400 21.6px/28px "Liberation Sans","Noto Sans CJK SC",sans-serif;color:#202124;letter-spacing:0.217px;text-decoration:underline;text-decoration-thickness:1.6px;text-underline-offset:2.5px;'>jquery.js:3</span>
<span class="t" id="t73" style='left:1427.00px;top:647.40px;font:400 21.6px/28px "Liberation Sans","Noto Sans CJK SC",sans-serif;color:#5f6368;letter-spacing:-0.145px;'>(mem…</span>
<span class="t" id="t74" style='left:1566.50px;top:647.40px;font:400 21.6px/28px "Liberation Sans","Noto Sans CJK SC",sans-serif;color:#202124;letter-spacing:0.168px;'>0 ms</span>
<span class="t" id="t75" style='left:748.30px;top:686.40px;font:400 21.6px/28px "Liberation Sans","Noto Sans CJK SC",sans-serif;color:#202124;letter-spacing:0.374px;'>10.gif</span>
<span class="t" id="t76" style='left:1052.60px;top:686.40px;font:400 21.6px/28px "Liberation Sans","Noto Sans CJK SC",sans-serif;color:#5f6368;letter-spacing:0.084px;'>200</span>
<span class="t" id="t77" style='left:1155.40px;top:686.40px;font:400 21.6px/28px "Liberation Sans","Noto Sans CJK SC",sans-serif;color:#5f6368;letter-spacing:0.544px;'>gif</span>
<span class="t" id="t78" style='left:1257.00px;top:686.40px;font:400 21.6px/28px "Liberation Sans","Noto Sans CJK SC",sans-serif;color:#202124;letter-spacing:0.217px;text-decoration:underline;text-decoration-thickness:1.6px;text-underline-offset:2.5px;'>jquery.js:3</span>
<span class="t" id="t79" style='left:1427.00px;top:686.40px;font:400 21.6px/28px "Liberation Sans","Noto Sans CJK SC",sans-serif;color:#5f6368;letter-spacing:-0.145px;'>(mem…</span>
<span class="t" id="t80" style='left:1566.50px;top:686.40px;font:400 21.6px/28px "Liberation Sans","Noto Sans CJK SC",sans-serif;color:#202124;letter-spacing:0.168px;'>0 ms</span>
<span class="t" id="t81" style='left:748.30px;top:725.40px;font:400 21.6px/28px "Liberation Sans","Noto Sans CJK SC",sans-serif;color:#202124;letter-spacing:0.374px;'>27.gif</span>
<span class="t" id="t82" style='left:1052.60px;top:725.40px;font:400 21.6px/28px "Liberation Sans","Noto Sans CJK SC",sans-serif;color:#5f6368;letter-spacing:0.084px;'>200</span>
<span class="t" id="t83" style='left:1155.40px;top:725.40px;font:400 21.6px/28px "Liberation Sans","Noto Sans CJK SC",sans-serif;color:#5f6368;letter-spacing:0.544px;'>gif</span>
<span class="t" id="t84" style='left:1257.00px;top:725.40px;font:400 21.6px/28px "Liberation Sans","Noto Sans CJK SC",sans-serif;color:#202124;letter-spacing:0.217px;text-decoration:underline;text-decoration-thickness:1.6px;text-underline-offset:2.5px;'>jquery.js:3</span>
<span class="t" id="t85" style='left:1427.00px;top:725.40px;font:400 21.6px/28px "Liberation Sans","Noto Sans CJK SC",sans-serif;color:#5f6368;letter-spacing:-0.145px;'>(mem…</span>
<span class="t" id="t86" style='left:1566.50px;top:725.40px;font:400 21.6px/28px "Liberation Sans","Noto Sans CJK SC",sans-serif;color:#202124;letter-spacing:0.168px;'>0 ms</span>
<span class="t" id="t87" style='left:748.30px;top:764.40px;font:400 21.6px/28px "Liberation Sans","Noto Sans CJK SC",sans-serif;color:#202124;letter-spacing:0.380px;'>haose.jpg</span>
<span class="t" id="t88" style='left:1052.60px;top:764.40px;font:400 21.6px/28px "Liberation Sans","Noto Sans CJK SC",sans-serif;color:#5f6368;letter-spacing:0.084px;'>200</span>
<span class="t" id="t89" style='left:1155.40px;top:764.40px;font:400 21.6px/28px "Liberation Sans","Noto Sans CJK SC",sans-serif;color:#5f6368;letter-spacing:0.657px;'>jpeg</span>
<span class="t" id="t90" style='left:1257.00px;top:764.40px;font:400 21.6px/28px "Liberation Sans","Noto Sans CJK SC",sans-serif;color:#202124;letter-spacing:0.217px;text-decoration:underline;text-decoration-thickness:1.6px;text-underline-offset:2.5px;'>jquery.js:3</span>
<span class="t" id="t91" style='left:1427.00px;top:764.40px;font:400 21.6px/28px "Liberation Sans","Noto Sans CJK SC",sans-serif;color:#5f6368;letter-spacing:-0.145px;'>(mem…</span>
<span class="t" id="t92" style='left:1566.50px;top:764.40px;font:400 21.6px/28px "Liberation Sans","Noto Sans CJK SC",sans-serif;color:#202124;letter-spacing:0.168px;'>0 ms</span>
<span class="t" id="t93" style='left:748.30px;top:803.40px;font:400 21.6px/28px "Liberation Sans","Noto Sans CJK SC",sans-serif;color:#202124;letter-spacing:0.343px;'>5.gif</span>
<span class="t" id="t94" style='left:1052.60px;top:803.40px;font:400 21.6px/28px "Liberation Sans","Noto Sans CJK SC",sans-serif;color:#5f6368;letter-spacing:0.084px;'>200</span>
<span class="t" id="t95" style='left:1155.40px;top:803.40px;font:400 21.6px/28px "Liberation Sans","Noto Sans CJK SC",sans-serif;color:#5f6368;letter-spacing:0.544px;'>gif</span>
<span class="t" id="t96" style='left:1257.00px;top:803.40px;font:400 21.6px/28px "Liberation Sans","Noto Sans CJK SC",sans-serif;color:#202124;letter-spacing:0.217px;text-decoration:underline;text-decoration-thickness:1.6px;text-underline-offset:2.5px;'>jquery.js:3</span>
<span class="t" id="t97" style='left:1427.00px;top:803.40px;font:400 21.6px/28px "Liberation Sans","Noto Sans CJK SC",sans-serif;color:#5f6368;letter-spacing:-0.145px;'>(mem…</span>
<span class="t" id="t98" style='left:1566.50px;top:803.40px;font:400 21.6px/28px "Liberation Sans","Noto Sans CJK SC",sans-serif;color:#202124;letter-spacing:0.168px;'>0 ms</span>
<span class="t" id="t99" style='left:748.30px;top:842.40px;font:400 21.6px/28px "Liberation Sans","Noto Sans CJK SC",sans-serif;color:#202124;letter-spacing:0.381px;'>hm.gif?hca=24030621F51…</span>
<span class="t" id="t100" style='left:1052.60px;top:842.40px;font:400 21.6px/28px "Liberation Sans","Noto Sans CJK SC",sans-serif;color:#5f6368;letter-spacing:0.084px;'>200</span>
<span class="t" id="t101" style='left:1155.40px;top:842.40px;font:400 21.6px/28px "Liberation Sans","Noto Sans CJK SC",sans-serif;color:#5f6368;letter-spacing:0.544px;'>gif</span>
<span class="t" id="t102" style='left:1257.00px;top:842.40px;font:400 21.6px/28px "Liberation Sans","Noto Sans CJK SC",sans-serif;color:#202124;letter-spacing:0.432px;'><span style="text-decoration:underline;text-decoration-thickness:1.6px;text-underline-offset:2.5px;">hm.js?d5be9</span>…</span>
<span class="t" id="t103" style='left:1453.30px;top:842.40px;font:400 21.6px/28px "Liberation Sans","Noto Sans CJK SC",sans-serif;color:#202124;letter-spacing:0.266px;'>499 B</span>
<span class="t" id="t104" style='left:1541.00px;top:842.40px;font:400 21.6px/28px "Liberation Sans","Noto Sans CJK SC",sans-serif;color:#202124;letter-spacing:0.397px;'>302 ms</span>
<span class="t" id="t105" style='left:748.30px;top:881.40px;font:400 21.6px/28px "Liberation Sans","Noto Sans CJK SC",sans-serif;color:#202124;letter-spacing:0.536px;'>hm.gif?cc=1&amp;ck=1&amp;cl=30-…</span>
<span class="t" id="t106" style='left:1052.60px;top:881.40px;font:400 21.6px/28px "Liberation Sans","Noto Sans CJK SC",sans-serif;color:#5f6368;letter-spacing:0.084px;'>200</span>
<span class="t" id="t107" style='left:1155.40px;top:881.40px;font:400 21.6px/28px "Liberation Sans","Noto Sans CJK SC",sans-serif;color:#5f6368;letter-spacing:0.544px;'>gif</span>
<span class="t" id="t108" style='left:1257.00px;top:881.40px;font:400 21.6px/28px "Liberation Sans","Noto Sans CJK SC",sans-serif;color:#202124;letter-spacing:0.432px;'><span style="text-decoration:underline;text-decoration-thickness:1.6px;text-underline-offset:2.5px;">hm.js?d5be9</span>…</span>
<span class="t" id="t109" style='left:1453.30px;top:881.40px;font:400 21.6px/28px "Liberation Sans","Noto Sans CJK SC",sans-serif;color:#202124;letter-spacing:0.266px;'>499 B</span>
<span class="t" id="t110" style='left:1541.00px;top:881.40px;font:400 21.6px/28px "Liberation Sans","Noto Sans CJK SC",sans-serif;color:#202124;letter-spacing:0.397px;'>308 ms</span>
<span class="t" id="t111" style='left:748.30px;top:920.40px;font:400 21.6px/28px "Liberation Sans","Noto Sans CJK SC",sans-serif;color:#202124;letter-spacing:0.285px;'>hm.gif?hca=714E6A297E7…</span>
<span class="t" id="t112" style='left:1052.60px;top:920.40px;font:400 21.6px/28px "Liberation Sans","Noto Sans CJK SC",sans-serif;color:#5f6368;letter-spacing:0.084px;'>200</span>
<span class="t" id="t113" style='left:1155.40px;top:920.40px;font:400 21.6px/28px "Liberation Sans","Noto Sans CJK SC",sans-serif;color:#5f6368;letter-spacing:0.544px;'>gif</span>
<span class="t" id="t114" style='left:1257.00px;top:920.40px;font:400 21.6px/28px "Liberation Sans","Noto Sans CJK SC",sans-serif;color:#202124;letter-spacing:0.432px;'><span style="text-decoration:underline;text-decoration-thickness:1.6px;text-underline-offset:2.5px;">hm.js?4a891</span>…</span>
<span class="t" id="t115" style='left:1453.30px;top:920.40px;font:400 21.6px/28px "Liberation Sans","Noto Sans CJK SC",sans-serif;color:#202124;letter-spacing:0.266px;'>499 B</span>
<span class="t" id="t116" style='left:1541.00px;top:920.40px;font:400 21.6px/28px "Liberation Sans","Noto Sans CJK SC",sans-serif;color:#202124;letter-spacing:0.397px;'>314 ms</span>
<span class="t" id="t117" style='left:748.30px;top:959.40px;font:400 21.6px/28px "Liberation Sans","Noto Sans CJK SC",sans-serif;color:#202124;letter-spacing:0.536px;'>hm.gif?cc=1&amp;ck=1&amp;cl=30-…</span>
<span class="t" id="t118" style='left:1052.60px;top:959.40px;font:400 21.6px/28px "Liberation Sans","Noto Sans CJK SC",sans-serif;color:#5f6368;letter-spacing:0.084px;'>200</span>
<span class="t" id="t119" style='left:1155.40px;top:959.40px;font:400 21.6px/28px "Liberation Sans","Noto Sans CJK SC",sans-serif;color:#5f6368;letter-spacing:0.544px;'>gif</span>
<span class="t" id="t120" style='left:1257.00px;top:959.40px;font:400 21.6px/28px "Liberation Sans","Noto Sans CJK SC",sans-serif;color:#202124;letter-spacing:0.432px;'><span style="text-decoration:underline;text-decoration-thickness:1.6px;text-underline-offset:2.5px;">hm.js?4a891</span>…</span>
<span class="t" id="t121" style='left:1453.30px;top:959.40px;font:400 21.6px/28px "Liberation Sans","Noto Sans CJK SC",sans-serif;color:#202124;letter-spacing:0.266px;'>499 B</span>
<span class="t" id="t122" style='left:1541.00px;top:959.40px;font:400 21.6px/28px "Liberation Sans","Noto Sans CJK SC",sans-serif;color:#202124;letter-spacing:0.397px;'>328 ms</span>
<span class="t" id="t123" style='left:748.30px;top:998.40px;font:400 21.6px/28px "Liberation Sans","Noto Sans CJK SC",sans-serif;color:#202124;letter-spacing:0.395px;'>hm.gif?hca=4055C7450A…</span>
<span class="t" id="t124" style='left:1052.60px;top:998.40px;font:400 21.6px/28px "Liberation Sans","Noto Sans CJK SC",sans-serif;color:#5f6368;letter-spacing:0.084px;'>200</span>
<span class="t" id="t125" style='left:1155.40px;top:998.40px;font:400 21.6px/28px "Liberation Sans","Noto Sans CJK SC",sans-serif;color:#5f6368;letter-spacing:0.544px;'>gif</span>
<span class="t" id="t126" style='left:1257.00px;top:998.40px;font:400 21.6px/28px "Liberation Sans","Noto Sans CJK SC",sans-serif;color:#202124;letter-spacing:0.543px;'><span style="text-decoration:underline;text-decoration-thickness:1.6px;text-underline-offset:2.5px;">hm.js?19c73</span>…</span>
<span class="t" id="t127" style='left:1453.30px;top:998.40px;font:400 21.6px/28px "Liberation Sans","Noto Sans CJK SC",sans-serif;color:#202124;letter-spacing:0.266px;'>499 B</span>
<span class="t" id="t128" style='left:1541.00px;top:998.40px;font:400 21.6px/28px "Liberation Sans","Noto Sans CJK SC",sans-serif;color:#202124;letter-spacing:0.397px;'>335 ms</span>
<span class="t" id="t129" style='left:748.30px;top:1037.40px;font:400 21.6px/28px "Liberation Sans","Noto Sans CJK SC",sans-serif;color:#202124;letter-spacing:0.536px;'>hm.gif?cc=1&amp;ck=1&amp;cl=30-…</span>
<span class="t" id="t130" style='left:1052.60px;top:1037.40px;font:400 21.6px/28px "Liberation Sans","Noto Sans CJK SC",sans-serif;color:#5f6368;letter-spacing:0.084px;'>200</span>
<span class="t" id="t131" style='left:1155.40px;top:1037.40px;font:400 21.6px/28px "Liberation Sans","Noto Sans CJK SC",sans-serif;color:#5f6368;letter-spacing:0.544px;'>gif</span>
<span class="t" id="t132" style='left:1257.00px;top:1037.40px;font:400 21.6px/28px "Liberation Sans","Noto Sans CJK SC",sans-serif;color:#202124;letter-spacing:0.543px;'><span style="text-decoration:underline;text-decoration-thickness:1.6px;text-underline-offset:2.5px;">hm.js?19c73</span>…</span>
<span class="t" id="t133" style='left:1453.30px;top:1037.40px;font:400 21.6px/28px "Liberation Sans","Noto Sans CJK SC",sans-serif;color:#202124;letter-spacing:0.266px;'>499 B</span>
<span class="t" id="t134" style='left:1541.00px;top:1037.40px;font:400 21.6px/28px "Liberation Sans","Noto Sans CJK SC",sans-serif;color:#202124;letter-spacing:0.397px;'>312 ms</span>
<span class="t" id="t135" style='left:748.30px;top:1076.40px;font:400 21.6px/28px "Liberation Sans","Noto Sans CJK SC",sans-serif;color:#202124;letter-spacing:0.209px;'>hm.gif?hca=9E18AA61EE…</span>
<span class="t" id="t136" style='left:1052.60px;top:1076.40px;font:400 21.6px/28px "Liberation Sans","Noto Sans CJK SC",sans-serif;color:#5f6368;letter-spacing:0.084px;'>200</span>
<span class="t" id="t137" style='left:1155.40px;top:1076.40px;font:400 21.6px/28px "Liberation Sans","Noto Sans CJK SC",sans-serif;color:#5f6368;letter-spacing:0.544px;'>gif</span>
<span class="t" id="t138" style='left:1257.00px;top:1076.40px;font:400 21.6px/28px "Liberation Sans","Noto Sans CJK SC",sans-serif;color:#202124;letter-spacing:0.432px;'><span style="text-decoration:underline;text-decoration-thickness:1.6px;text-underline-offset:2.5px;">hm.js?79978</span>…</span>
<span class="t" id="t139" style='left:1453.30px;top:1076.40px;font:400 21.6px/28px "Liberation Sans","Noto Sans CJK SC",sans-serif;color:#202124;letter-spacing:0.266px;'>499 B</span>
<span class="t" id="t140" style='left:1541.00px;top:1076.40px;font:400 21.6px/28px "Liberation Sans","Noto Sans CJK SC",sans-serif;color:#202124;letter-spacing:0.397px;'>309 ms</span>
<span class="t" id="t141" style='left:748.30px;top:1115.40px;font:400 21.6px/28px "Liberation Sans","Noto Sans CJK SC",sans-serif;color:#202124;letter-spacing:0.536px;'>hm.gif?cc=0&amp;ck=1&amp;cl=30-…</span>
<span class="t" id="t142" style='left:1052.60px;top:1115.40px;font:400 21.6px/28px "Liberation Sans","Noto Sans CJK SC",sans-serif;color:#5f6368;letter-spacing:0.084px;'>200</span>
<span class="t" id="t143" style='left:1155.40px;top:1115.40px;font:400 21.6px/28px "Liberation Sans","Noto Sans CJK SC",sans-serif;color:#5f6368;letter-spacing:0.544px;'>gif</span>
<span class="t" id="t144" style='left:1257.00px;top:1115.40px;font:400 21.6px/28px "Liberation Sans","Noto Sans CJK SC",sans-serif;color:#202124;letter-spacing:0.432px;'><span style="text-decoration:underline;text-decoration-thickness:1.6px;text-underline-offset:2.5px;">hm.js?79978</span>…</span>
<span class="t" id="t145" style='left:1453.30px;top:1115.40px;font:400 21.6px/28px "Liberation Sans","Noto Sans CJK SC",sans-serif;color:#202124;letter-spacing:0.266px;'>499 B</span>
<span class="t" id="t146" style='left:1541.00px;top:1115.40px;font:400 21.6px/28px "Liberation Sans","Noto Sans CJK SC",sans-serif;color:#202124;letter-spacing:0.397px;'>310 ms</span>
<span class="t" id="t147" style='left:723.90px;top:1160.00px;font:400 21.6px/28px "Liberation Sans","Noto Sans CJK SC",sans-serif;color:#5f6368;letter-spacing:0.286px;'>46 requests</span>
<span class="t" id="t148" style='left:876.00px;top:1160.00px;font:400 21.6px/28px "Liberation Sans","Noto Sans CJK SC",sans-serif;color:#5f6368;letter-spacing:0.330px;'>52.0 kB transferred</span>
<span class="t" id="t149" style='left:1102.50px;top:1160.00px;font:400 21.6px/28px "Liberation Sans","Noto Sans CJK SC",sans-serif;color:#5f6368;letter-spacing:0.319px;'>4.5 MB resources</span>
<span class="t" id="t150" style='left:1312.90px;top:1160.00px;font:400 21.6px/28px "Liberation Sans","Noto Sans CJK SC",sans-serif;color:#5f6368;letter-spacing:0.169px;'>Finish: 13.33 s</span>
<span class="t" id="t151" style='left:1492.30px;top:1160.00px;font:400 21.6px/28px "Liberation Sans","Noto Sans CJK SC",sans-serif;color:#15158f;letter-spacing:0.453px;'>DOMContentLoaded: 419 ms</span>
<div id="phone">
<div class="a" style="left:0.0px;top:0px;width:553px;height:58.7px;background:linear-gradient(100deg,#a72ab4 0%,#c338bb 40%,#ee52cc 80%,#ff5cd4 100%);"></div>
<div class="a" style="left:3.7px;top:58.7px;width:540.3px;height:101.7px;background:#fbfafb;overflow:hidden;"><div class="a" style="left:2.0px;top:3.3px;width:104px;height:98px;border-radius:4px;background:#f6f3f3;filter:blur(7px)"></div><div class="a" style="left:14.0px;top:11.3px;width:50px;height:92px;border-radius:18px 18px 4px 4px;background:linear-gradient(#6f5e60,#857474 60%,#8d7e7e);filter:blur(8px)"></div><div class="a" style="left:18.0px;top:77.3px;width:70px;height:30px;border-radius:40% 60% 0 0;background:#8c7c7c;filter:blur(8px)"></div><div class="a" style="left:114.0px;top:3.3px;width:100px;height:98px;border-radius:4px;background:#f5f0f1;filter:blur(7px)"></div><div class="a" style="left:119.0px;top:15.3px;width:28px;height:22px;border-radius:50%;background:#c5b5b7;filter:blur(7px)"></div><div class="a" style="left:150.0px;top:11.3px;width:24px;height:30px;border-radius:50%;background:#b5a1a4;filter:blur(7px)"></div><div class="a" style="left:122.0px;top:45.3px;width:84px;height:46px;border-radius:30px;background:#e9cdc9;filter:blur(9px)"></div><div class="a" style="left:184.0px;top:47.3px;width:20px;height:42px;border-radius:50%;background:#b89a9a;filter:blur(7px)"></div><div class="a" style="left:224.0px;top:3.3px;width:102px;height:98px;border-radius:4px;background:linear-gradient(90deg,#e6e0ea,#efecf4 55%,#f8f7fa);filter:blur(7px)"></div><div class="a" style="left:256.0px;top:14.3px;width:34px;height:28px;border-radius:50%;background:#a8909c;filter:blur(7px)"></div><div class="a" style="left:244.0px;top:39.3px;width:50px;height:52px;border-radius:24px;background:#dcbcb8;filter:blur(8px)"></div><div class="a" style="left:238.0px;top:39.3px;width:20px;height:50px;border-radius:50%;background:#c4bccc;filter:blur(8px)"></div><div class="a" style="left:262.0px;top:51.3px;width:22px;height:32px;border-radius:50%;background:#c89c90;filter:blur(7px)"></div><div class="a" style="left:345.0px;top:12.3px;width:80px;height:78px;border-radius:16px;background:linear-gradient(#4d4645 0,#4d4645 66%,#bfa032 78%,#cfb22e 100%);filter:blur(5px)"></div><div class="a" style="left:356.0px;top:18.3px;width:56px;height:58px;border-radius:50%;background:#cf9530;filter:blur(6px)"></div><div class="a" style="left:456.0px;top:11.3px;width:92px;height:80px;border-radius:6px;background:#b8a29c;filter:blur(7px)"></div><div class="a" style="left:462.0px;top:17.3px;width:34px;height:34px;border-radius:50%;background:#9c7c74;filter:blur(8px)"></div><div class="a" style="left:497.0px;top:15.3px;width:36px;height:30px;border-radius:50%;background:#c9ada4;filter:blur(8px)"></div><div class="a" style="left:482.0px;top:57.3px;width:50px;height:30px;border-radius:50%;background:#a4867e;filter:blur(8px)"></div><div class="a" style="left:0;top:0;width:541px;height:16px;background:linear-gradient(rgba(215,130,212,.50),rgba(225,170,225,.20) 50%,rgba(255,255,255,0))"></div></div>
<div class="a" style="left:0.0px;top:254.4px;width:553px;height:1.2px;background:#f0f0f0;"></div>
<div class="a" style="left:14.7px;top:252.5px;width:101.3px;height:3.3px;background:#d81e5b;"></div>
<div class="a" style="left:1.7px;top:257.5px;width:99.5px;height:104.42999999999999px;background:#fcfafa;overflow:hidden;"><div class="a" style="left:10.0px;top:7.5px;width:81px;height:78px;border-radius:10px;background:#bd9572;filter:blur(7.5px)"></div><div class="a" style="left:42.0px;top:19.5px;width:27px;height:50px;border-radius:50%;background:#7389a0;filter:blur(7.5px)"></div><div class="a" style="left:52.0px;top:71.5px;width:42px;height:18px;border-radius:50%;background:#f0e8d4;filter:blur(6.5px)"></div><div class="a" style="left:14.0px;top:13.5px;width:26px;height:30px;border-radius:50%;background:#c9a07a;filter:blur(7.5px)"></div></div>
<div class="a" style="left:449.7px;top:277.9px;width:100px;height:66.1px;background:linear-gradient(40deg,#a628b5 0%,#cf3fc1 50%,#ff5bd3 100%);border-radius:4px;box-shadow:0 7px 7px -4px rgba(240,80,200,.42);"></div>
<div class="a" style="left:101.2px;top:359.03px;width:450px;height:1.2px;background:#ededed;"></div>
<div class="a" style="left:1.7px;top:362.13px;width:99.5px;height:104.42999999999999px;background:#fcfafa;overflow:hidden;"><div class="a" style="left:10.0px;top:8.5px;width:81px;height:80px;border-radius:10px;background:#d8a796;filter:blur(7.5px)"></div><div class="a" style="left:19.0px;top:11.5px;width:36px;height:32px;border-radius:50%;background:#74483c;filter:blur(7.5px)"></div><div class="a" style="left:44.0px;top:47.5px;width:40px;height:34px;border-radius:50%;background:#dfb19f;filter:blur(7.5px)"></div></div>
<div class="a" style="left:449.7px;top:382.53px;width:100px;height:66.1px;background:linear-gradient(40deg,#a628b5 0%,#cf3fc1 50%,#ff5bd3 100%);border-radius:4px;box-shadow:0 7px 7px -4px rgba(240,80,200,.42);"></div>
<div class="a" style="left:101.2px;top:463.66px;width:450px;height:1.2px;background:#ededed;"></div>
<div class="a" style="left:1.7px;top:466.76px;width:99.5px;height:104.42999999999999px;background:#fcfafa;overflow:hidden;"><div class="a" style="left:8.0px;top:6.5px;width:84px;height:88px;border-radius:12px;background:linear-gradient(#6f878e 0,#727a80 70%,#ec5c7e 84%,#f4708c 100%);filter:blur(7.5px)"></div><div class="a" style="left:24.0px;top:17.5px;width:55px;height:44px;border-radius:50%;background:#f4f4f4;filter:blur(7.5px)"></div><div class="a" style="left:6.0px;top:33.5px;width:18px;height:46px;border-radius:50%;background:#4a4e52;filter:blur(6.5px)"></div></div>
<div class="a" style="left:449.7px;top:487.16px;width:100px;height:66.1px;background:linear-gradient(40deg,#a628b5 0%,#cf3fc1 50%,#ff5bd3 100%);border-radius:4px;box-shadow:0 7px 7px -4px rgba(240,80,200,.42);"></div>
<div class="a" style="left:101.2px;top:568.29px;width:450px;height:1.2px;background:#ededed;"></div>
<div class="a" style="left:1.7px;top:571.39px;width:99.5px;height:104.42999999999999px;background:#fcfafa;overflow:hidden;"><div class="a" style="left:12.0px;top:10.5px;width:78px;height:77px;border-radius:14px;background:#2f2d2b;filter:blur(6.5px)"></div><div class="a" style="left:21.0px;top:24.5px;width:58px;height:47px;border-radius:50%;background:#e9a90d;filter:blur(6.5px)"></div></div>
<div class="a" style="left:449.7px;top:591.79px;width:100px;height:66.1px;background:linear-gradient(40deg,#a628b5 0%,#cf3fc1 50%,#ff5bd3 100%);border-radius:4px;box-shadow:0 7px 7px -4px rgba(240,80,200,.42);"></div>
<div class="a" style="left:101.2px;top:672.92px;width:450px;height:1.2px;background:#ededed;"></div>
<div class="a" style="left:1.7px;top:676.02px;width:99.5px;height:104.42999999999999px;background:#fcfafa;overflow:hidden;"><div class="a" style="left:12.0px;top:11.5px;width:78px;height:78px;border-radius:8px;background:#8b5656;filter:blur(7.5px)"></div><div class="a" style="left:20.0px;top:21.5px;width:40px;height:30px;border-radius:50%;background:#9a6462;filter:blur(7.5px)"></div><div class="a" style="left:44.0px;top:55.5px;width:36px;height:26px;border-radius:50%;background:#7e4e4e;filter:blur(7.5px)"></div></div>
<div class="a" style="left:449.7px;top:696.42px;width:100px;height:66.1px;background:linear-gradient(40deg,#a628b5 0%,#cf3fc1 50%,#ff5bd3 100%);border-radius:4px;box-shadow:0 7px 7px -4px rgba(240,80,200,.42);"></div>
<div class="a" style="left:101.2px;top:777.55px;width:450px;height:1.2px;background:#ededed;"></div>
<div class="a" style="left:1.7px;top:780.65px;width:99.5px;height:104.42999999999999px;background:#fcfafa;overflow:hidden;"><div class="a" style="left:11.0px;top:12.5px;width:79px;height:78px;border-radius:10px;background:#efd722;filter:blur(7.5px)"></div><div class="a" style="left:21.0px;top:21.5px;width:18px;height:20px;border-radius:50%;background:#8d7d12;filter:blur(6.0px)"></div><div class="a" style="left:62.0px;top:21.5px;width:18px;height:20px;border-radius:50%;background:#8d7d12;filter:blur(6.0px)"></div><div class="a" style="left:21.0px;top:55.5px;width:18px;height:20px;border-radius:50%;background:#8d7d12;filter:blur(6.0px)"></div><div class="a" style="left:62.0px;top:55.5px;width:18px;height:20px;border-radius:50%;background:#8d7d12;filter:blur(6.0px)"></div></div>
<div class="a" style="left:449.7px;top:801.05px;width:100px;height:66.1px;background:linear-gradient(40deg,#a628b5 0%,#cf3fc1 50%,#ff5bd3 100%);border-radius:4px;box-shadow:0 7px 7px -4px rgba(240,80,200,.42);"></div>
<div class="a" style="left:101.2px;top:882.18px;width:450px;height:1.2px;background:#ededed;"></div>
<div class="a" style="left:1.7px;top:885.28px;width:99.5px;height:93.5px;background:#fcfafa;overflow:hidden;"><div class="a" style="left:8.0px;top:5.5px;width:84px;height:88px;border-radius:8px;background:#e6cbb8;filter:blur(7.5px)"></div><div class="a" style="left:24.0px;top:43.5px;width:30px;height:36px;border-radius:50%;background:#a67e66;filter:blur(7.5px)"></div><div class="a" style="left:65.0px;top:7.5px;width:26px;height:84px;border-radius:10px;background:#a47862;filter:blur(7.5px)"></div><div class="a" style="left:40.0px;top:5.5px;width:22px;height:30px;border-radius:50%;background:#ead8c2;filter:blur(6.5px)"></div></div>
<div class="a" style="left:449.7px;top:905.68px;width:100px;height:66.1px;background:linear-gradient(40deg,#a628b5 0%,#cf3fc1 50%,#ff5bd3 100%);border-radius:4px;box-shadow:0 7px 7px -4px rgba(240,80,200,.42);"></div>
<div class="a" style="left:7.5px;top:986.81px;width:545px;height:1.2px;background:#ededed;"></div>
<div class="a" style="left:12.2px;top:994.6px;width:77px;height:10px;background:#555;border-radius:9px 9px 0 0;"></div>
<div class="a" style="left:544.1px;top:6px;width:3.3px;height:995px;background:linear-gradient(90deg,#8f8f8f,#a8a8a8);"></div>
<div class="a" style="left:547.4px;top:58.7px;width:7px;height:940px;background:#fff;"></div>
<span class="t f" id="t152" style='left:226.30px;top:14.50px;font:700 25.3px/33px "Liberation Serif","Noto Serif CJK SC",serif;color:#fff;letter-spacing:0.066px;-webkit-text-stroke:.45px #fff;'>九色导航</span>
<span class="t f" id="t153" style='left:18.00px;top:165.30px;font:500 18.3px/24px "Liberation Serif","Noto Serif CJK SC",serif;color:#333;letter-spacing:0.192px;-webkit-text-stroke:.12px #333;'>茄子视频</span>
<span class="t f" id="t154" style='left:129.90px;top:165.30px;font:500 18.3px/24px "Liberation Serif","Noto Serif CJK SC",serif;color:#333;letter-spacing:-0.042px;-webkit-text-stroke:.12px #333;'>丝瓜视频</span>
<span class="t f" id="t155" style='left:240.40px;top:165.30px;font:500 18.3px/24px "Liberation Serif","Noto Serif CJK SC",serif;color:#333;letter-spacing:-0.275px;-webkit-text-stroke:.12px #333;'>草莓视频</span>
<span class="t f" id="t156" style='left:351.00px;top:165.30px;font:500 18.3px/24px "Liberation Serif","Noto Serif CJK SC",serif;color:#333;letter-spacing:-0.308px;-webkit-text-stroke:.12px #333;'>好色先生</span>
<span class="t f" id="t157" style='left:461.70px;top:165.30px;font:500 18.3px/24px "Liberation Serif","Noto Serif CJK SC",serif;color:#333;letter-spacing:-0.108px;-webkit-text-stroke:.12px #333;'>芭乐视频</span>
<span class="t f" id="t158" style='left:15.10px;top:208.60px;font:700 24.6px/32px "Liberation Serif","Noto Serif CJK SC",serif;color:#333;letter-spacing:0.900px;-webkit-text-stroke:.3px #333;'>热门APP</span>
<span class="t f" id="t159" style='left:118.90px;top:270.10px;font:600 25.3px/33px "Liberation Serif","Noto Serif CJK SC",serif;color:#050505;letter-spacing:0.099px;'>色盒直播</span>
<span class="t f" id="t160" style='left:118.90px;top:310.00px;font:500 18.3px/24px "Liberation Serif","Noto Serif CJK SC",serif;color:#a21cb0;letter-spacing:-0.014px;-webkit-text-stroke:.12px #a21cb0;'>淫乱 性趴 免费在线观看</span>
<span class="t f" id="t161" style='left:461.50px;top:299.90px;font:700 18.3px/24px "Liberation Serif","Noto Serif CJK SC",serif;color:#fff;letter-spacing:-0.042px;-webkit-text-stroke:.3px #fff;'>立即下载</span>
<span class="t f" id="t162" style='left:118.90px;top:374.73px;font:600 25.3px/33px "Liberation Serif","Noto Serif CJK SC",serif;color:#050505;letter-spacing:0.099px;'>新月直播</span>
<span class="t f" id="t163" style='left:118.90px;top:414.63px;font:500 18.3px/24px "Liberation Serif","Noto Serif CJK SC",serif;color:#a21cb0;letter-spacing:-0.066px;-webkit-text-stroke:.12px #a21cb0;'>全天候大秀免费观看</span>
<span class="t f" id="t164" style='left:461.50px;top:404.53px;font:700 18.3px/24px "Liberation Serif","Noto Serif CJK SC",serif;color:#fff;letter-spacing:-0.042px;-webkit-text-stroke:.3px #fff;'>立即下载</span>
<span class="t f" id="t165" style='left:118.90px;top:479.36px;font:600 25.3px/33px "Liberation Serif","Noto Serif CJK SC",serif;color:#050505;letter-spacing:0.074px;'><span style="font-weight:400">91</span>免费版</span>
<span class="t f" id="t166" style='left:118.90px;top:519.26px;font:500 18.3px/24px "Liberation Serif","Noto Serif CJK SC",serif;color:#a21cb0;letter-spacing:-0.161px;-webkit-text-stroke:.12px #a21cb0;'>少妇嫩模免费看</span>
<span class="t f" id="t167" style='left:461.50px;top:509.16px;font:700 18.3px/24px "Liberation Serif","Noto Serif CJK SC",serif;color:#fff;letter-spacing:-0.042px;-webkit-text-stroke:.3px #fff;'>立即下载</span>
<span class="t f" id="t168" style='left:118.90px;top:583.99px;font:600 25.3px/33px "Liberation Serif","Noto Serif CJK SC",serif;color:#050505;letter-spacing:0.160px;'><span style="font-weight:400">91</span>香蕉视频</span>
<span class="t f" id="t169" style='left:118.90px;top:623.89px;font:500 18.3px/24px "Liberation Serif","Noto Serif CJK SC",serif;color:#a21cb0;letter-spacing:-0.064px;-webkit-text-stroke:.12px #a21cb0;'>亚洲最强看片神器</span>
<span class="t f" id="t170" style='left:461.50px;top:613.79px;font:700 18.3px/24px "Liberation Serif","Noto Serif CJK SC",serif;color:#fff;letter-spacing:-0.042px;-webkit-text-stroke:.3px #fff;'>立即下载</span>
<span class="t f" id="t171" style='left:118.90px;top:688.62px;font:600 25.3px/33px "Liberation Serif","Noto Serif CJK SC",serif;color:#050505;letter-spacing:-0.403px;'>片多多</span>
<span class="t f" id="t172" style='left:118.90px;top:728.52px;font:500 18.3px/24px "Liberation Serif","Noto Serif CJK SC",serif;color:#a21cb0;letter-spacing:-0.069px;-webkit-text-stroke:.12px #a21cb0;'>十万+视频免费看</span>
<span class="t f" id="t173" style='left:461.50px;top:718.42px;font:700 18.3px/24px "Liberation Serif","Noto Serif CJK SC",serif;color:#fff;letter-spacing:-0.042px;-webkit-text-stroke:.3px #fff;'>立即下载</span>
<span class="t f" id="t174" style='left:118.90px;top:793.25px;font:600 25.3px/33px "Liberation Serif","Noto Serif CJK SC",serif;color:#050505;letter-spacing:-0.134px;'>免费看片</span>
<span class="t f" id="t175" style='left:118.90px;top:833.15px;font:500 18.3px/24px "Liberation Serif","Noto Serif CJK SC",serif;color:#a21cb0;letter-spacing:-0.111px;-webkit-text-stroke:.12px #a21cb0;'>成人视频免费看</span>
<span class="t f" id="t176" style='left:461.50px;top:823.05px;font:700 18.3px/24px "Liberation Serif","Noto Serif CJK SC",serif;color:#fff;letter-spacing:-0.042px;-webkit-text-stroke:.3px #fff;'>立即下载</span>
<span class="t f" id="t177" style='left:118.90px;top:897.88px;font:600 25.3px/33px "Liberation Serif","Noto Serif CJK SC",serif;color:#050505;letter-spacing:0.172px;'>绿巨人<span style="font-weight:400">app</span></span>
<span class="t f" id="t178" style='left:118.90px;top:937.78px;font:500 18.3px/24px "Liberation Serif","Noto Serif CJK SC",serif;color:#a21cb0;-webkit-text-stroke:.12px #a21cb0;'>海量无码精品天天更新</span>
<span class="t f" id="t179" style='left:461.50px;top:927.68px;font:700 18.3px/24px "Liberation Serif","Noto Serif CJK SC",serif;color:#fff;letter-spacing:-0.042px;-webkit-text-stroke:.3px #fff;'>立即下载</span>
</div>
</div>
</body>
</html>
